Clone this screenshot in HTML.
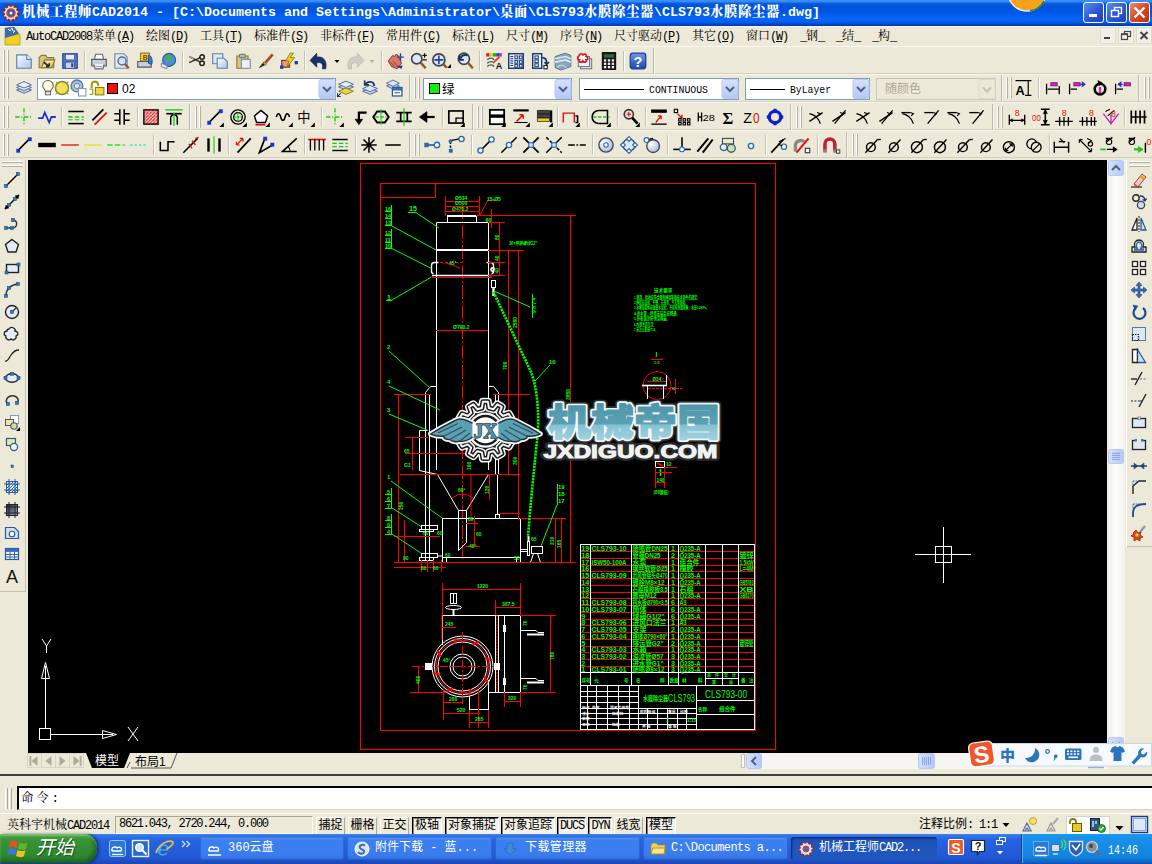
<!DOCTYPE html>
<html><head><meta charset="utf-8"><title>机械工程师CAD2014</title>
<style>
*{box-sizing:border-box;margin:0;padding:0}
html,body{width:1152px;height:864px;overflow:hidden;background:#ece9d8}
body{position:relative;font-family:"Liberation Mono","Noto Serif CJK SC",serif;font-size:12px;color:#000}
.abs{position:absolute}
.l{letter-spacing:-1.2px}
#title{left:0;top:0;width:1152px;height:26px;background:linear-gradient(#3d95ff 0,#2e84f4 2px,#0a5cdc 3.5px,#0052d8 6px,#0055e4 12px,#0666f6 19px,#0560ee 22px,#0348d0 24px,#0235b0 26px);color:#fff}
#title .txt{left:22px;top:5px;white-space:nowrap;font-family:"Liberation Mono","Noto Serif CJK SC",serif;font-size:13.33px;font-weight:bold;line-height:16px}
#title .txt b{letter-spacing:0.67px}
.tb{position:absolute;top:2px;width:21px;height:21px;border:1px solid #fff;border-radius:3px;background:linear-gradient(135deg,#5a8ef0,#2a58d8 55%,#1a40b8)}
.tb.x{background:linear-gradient(135deg,#ea8a68,#d4451f 55%,#b8330f)}
#menu{left:0;top:26px;width:1152px;height:20px;background:#ece9d8;white-space:nowrap;border-top:1px solid #f6f5f0}
#menu .mi{position:absolute;top:3px;height:14px;line-height:14px;font-size:12px}
.row{position:absolute;left:0;width:1152px;height:28px;background:#ece9d8;border-top:1px solid #f8f7f1;border-bottom:1px solid #d2cfbe}
#canvas{left:28px;top:160px;width:1079px;height:593px;background:#000}
#vscroll{left:1107px;top:160px;width:18px;height:593px;background:linear-gradient(90deg,#f0efe8,#fdfdfb 50%,#f3f1ec)}
#tabs{left:28px;top:753px;width:1097px;height:16px;background:#ece9d8}
#cmdsep{left:0;top:774px;width:1152px;height:2px;background:#404040}
#cmd{left:17px;top:786px;width:1135px;height:24px;background:#fff;border-top:2px solid #000;border-left:2px solid #000;border-bottom:1px solid #d4d0c8;font-size:12.5px;line-height:23px;padding:0 0 0 2px;letter-spacing:2.8px}
#status{left:0;top:813px;width:1152px;height:22px;background:#ece9d8;border-top:1px solid #fff}
#task{left:0;top:834px;width:1152px;height:30px;background:linear-gradient(#3f86f2 0,#2f72ea 2px,#2663e0 6px,#245edc 14px,#2157d4 24px,#1c48b8 29px)}

.sb{position:absolute;top:3px;height:18px;line-height:16px;font-size:12px;text-align:center;white-space:nowrap;overflow:hidden;font-family:"Liberation Mono","Noto Sans CJK SC",sans-serif}
.sb.up{border:1px solid #fff;border-right-color:#aca899;border-bottom-color:#aca899}
.sb.dn{border:1px solid #000;border-right-color:#fff;border-bottom-color:#fff;box-shadow:inset 1px 1px 0 #808080;background:#f4f2e8}
.tk{position:absolute;top:3px;height:23px;border-radius:3px;background:linear-gradient(#5a9cf8 0,#3c80f0 3px,#3a7cee 18px,#2f6ce0 23px);box-shadow:inset 0 0 0 1px rgba(20,60,160,.35);color:#fff;font-size:12px;line-height:23px;white-space:nowrap;overflow:hidden;font-family:"Liberation Mono","Noto Sans CJK SC",sans-serif}
.tk.act{background:linear-gradient(#1a48a8 0,#1e52b8 4px,#2058c0 23px);box-shadow:inset 1px 1px 2px rgba(0,0,30,.5)}
.tk i{position:absolute;left:7px;top:4px;width:15px;height:15px;display:block}
.tk>span{position:absolute;left:28px;top:0}
</style></head><body>
<div id="title" class="abs"><div class="abs txt"><b>机械工程师</b>CAD2014 - [C:\Documents and Settings\Administrator\<b>桌面</b>\CLS793<b>水膜除尘器</b>\CLS793<b>水膜除尘器</b>.dwg]</div>
<div class="tb" style="left:1083px"></div><div class="tb" style="left:1106px"></div><div class="tb x" style="left:1129px"></div></div>
<div id="menu" class="abs">
<span class="mi" style="left:26px"><span class="l">AutoCAD2008</span>菜单<span class="l">(<u>A</u>)</span></span>
<span class="mi" style="left:146px">绘图<span class="l">(<u>D</u>)</span></span>
<span class="mi" style="left:200px">工具<span class="l">(<u>T</u>)</span></span>
<span class="mi" style="left:254px">标准件<span class="l">(<u>S</u>)</span></span>
<span class="mi" style="left:320px">非标件<span class="l">(<u>F</u>)</span></span>
<span class="mi" style="left:386px">常用件<span class="l">(<u>C</u>)</span></span>
<span class="mi" style="left:452px">标注<span class="l">(<u>L</u>)</span></span>
<span class="mi" style="left:506px">尺寸<span class="l">(<u>M</u>)</span></span>
<span class="mi" style="left:560px">序号<span class="l">(<u>N</u>)</span></span>
<span class="mi" style="left:614px">尺寸驱动<span class="l">(<u>P</u>)</span></span>
<span class="mi" style="left:692px">其它<span class="l">(<u>O</u>)</span></span>
<span class="mi" style="left:746px">窗口<span class="l">(<u>W</u>)</span></span>
<span class="mi" style="left:800px"><span class="l">_</span>钢<span class="l">_</span></span>
<span class="mi" style="left:836px"><span class="l">_</span>结<span class="l">_</span></span>
<span class="mi" style="left:872px"><span class="l">_</span>构<span class="l">_</span></span>
</div>
<svg class="abs" style="left:0;top:0" width="1152" height="46" viewBox="0 0 1152 46">
<circle cx="11" cy="13" r="7.5" fill="#e4dcdc" stroke="#8a2820" stroke-width="2.6" stroke-dasharray="2.6 1.6"/><circle cx="11" cy="13" r="4" fill="#3a5aa8" stroke="#c84030" stroke-width="1.4"/><circle cx="11" cy="13" r="1.5" fill="#fff"/>
<circle cx="1027" cy="-8" r="19" fill="#f5a21e" stroke="#e8f0e0" stroke-width="1.5"/><path d="M1030 10.8a19 19 0 0 0 14-10" fill="none" stroke="#3a7a28" stroke-width="1.6"/>
<rect x="1089" y="14" width="8" height="3" fill="#fff"/>
<rect x="1114.5" y="7.5" width="7" height="6" fill="none" stroke="#fff" stroke-width="1.4"/><rect x="1111.5" y="10.5" width="7" height="6" fill="#2a58d8" stroke="#fff" stroke-width="1.4"/>
<path d="M1134.5 7.5l10 10M1144.5 7.5l-10 10" stroke="#fff" stroke-width="2.4"/>
<path d="M5 28l9-1 6 8v10h-15z" fill="#f0d020" stroke="#a08810" stroke-width=".6"/><path d="M5 28l9-1 5 7-14 4z" fill="#3a6ab0"/><path d="M8 29l2 2 2-3 1 3 2 0-2 2" fill="none" stroke="#fff" stroke-width=".9"/>
<g stroke="#dedbcc" fill="#f2f0e6"><rect x="1100.5" y="27.5" width="15" height="16"/><rect x="1118.5" y="27.5" width="15" height="16"/><rect x="1136.5" y="27.5" width="15" height="16"/></g>
<rect x="1104" y="37" width="6" height="2" fill="#444"/>
<rect x="1124.5" y="31.5" width="6" height="5" fill="none" stroke="#444" stroke-width="1.2"/><rect x="1121.5" y="34.5" width="6" height="5" fill="#f2f0e6" stroke="#444" stroke-width="1.2"/><path d="M1121 34h7" stroke="#444" stroke-width="1.6"/>
<path d="M1140.5 32l7 7M1147.5 32l-7 7" stroke="#444" stroke-width="2"/>
</svg>
<div class="row" style="top:46px"></div>
<div class="row" style="top:74px"></div>
<div class="row" style="top:102px"></div>
<div class="row" style="top:130px"></div>
<svg class="abs" id="tbs" style="left:0;top:46px" width="1152" height="113" viewBox="0 46 1152 113"><defs>
<linearGradient id="pg" x1="0" y1="0" x2="1" y2="1"><stop offset="0" stop-color="#fff"/><stop offset="1" stop-color="#a8c4e8"/></linearGradient>
<linearGradient id="hg" x1="0" y1="0" x2="0" y2="1"><stop offset="0" stop-color="#6a9aea"/><stop offset="1" stop-color="#1a4ab0"/></linearGradient>
<linearGradient id="dd" x1="0" y1="0" x2="0" y2="1"><stop offset="0" stop-color="#d6e2fd"/><stop offset="1" stop-color="#b4c8f6"/></linearGradient>
<radialGradient id="sp" cx=".35" cy=".35" r=".7"><stop offset="0" stop-color="#fff"/><stop offset="1" stop-color="#a8bcd8"/></radialGradient>
<pattern id="ht" width="3" height="3" patternUnits="userSpaceOnUse"><rect width="3" height="3" fill="#f8c8c8"/><path d="M0 3l3-3" stroke="#e02020" stroke-width="1"/></pattern>
</defs>
<line x1="3.5" y1="50" x2="3.5" y2="72" stroke="#fff"/><line x1="4.5" y1="50" x2="4.5" y2="72" stroke="#b4b1a2"/>
<line x1="7.5" y1="50" x2="7.5" y2="72" stroke="#fff"/><line x1="8.5" y1="50" x2="8.5" y2="72" stroke="#b4b1a2"/>
<g transform="translate(15.04,52.04) scale(1.12)"><path d="M1.5 2.5h9l4 4v8h-13z" fill="url(#pg)" stroke="#5f7fa8" stroke-width="1" /><path d="M10.5 2.5v4h4" fill="#fff" stroke="#5f7fa8" stroke-width="1" /></g>
<g transform="translate(38.04,52.04) scale(1.12)"><path d="M1 5l2-2h4l1 2h6v9h-13z" fill="#d9c47a" stroke="#8a7a3a" stroke-width="1" /><path d="M3 14l3-7h9l-3 7z" fill="#f0dc8c" stroke="#8a7a3a" stroke-width="1" /><path d="M5 9l5 4M10 13v-3M10 13h-3" fill="none" stroke="#2a2a2a" stroke-width="1.6" /></g>
<g transform="translate(61.04,52.04) scale(1.12)"><rect x="1.5" y="1.5" width="13" height="13" fill="#4f78c8" stroke="#2a4a90" stroke-width="1" /><rect x="4" y="2" width="8" height="5" fill="#e8eef8" stroke="#2a4a90" stroke-width="0.6" /><rect x="4" y="9" width="8" height="5.5" fill="#c8d4ea" stroke="#2a4a90" stroke-width="0.6" /><rect x="9" y="10" width="2" height="3.5" fill="#2a4a90" stroke="none" stroke-width="0" /></g>
<line x1="84.5" y1="51" x2="84.5" y2="71" stroke="#c5c2b2"/><line x1="85.5" y1="51" x2="85.5" y2="71" stroke="#fff"/>
<g transform="translate(90.04,52.04) scale(1.12)"><path d="M4 6l1-4h6l1 4" fill="#fff" stroke="#667" stroke-width="1" /><path d="M1.5 6.5h13v6h-13z" fill="#c9ced8" stroke="#556" stroke-width="1" /><path d="M3.5 11l1 4h7l1-4" fill="#f4f6fa" stroke="#667" stroke-width="1" /><line x1="5" y1="13" x2="11" y2="13" stroke="#889" stroke-width="0.8" /></g>
<g transform="translate(112.04,52.04) scale(1.12)"><path d="M2.5 1.5h8l3 3v10h-11z" fill="#dfe8f4" stroke="#6f89b0" stroke-width="1" /><circle cx="9" cy="8" r="3.6" fill="#cfe0f4" stroke="#5a6a80" stroke-width="1.3"/><line x1="11.5" y1="10.8" x2="15" y2="14.5" stroke="#8a5a30" stroke-width="2" /></g>
<g transform="translate(136.04,52.04) scale(1.12)"><path d="M4 1l8 0v7h-8z" fill="#f2d048" stroke="#9a7a18" stroke-width="1" /><path d="M1.5 8.5h12v5h-12z" fill="#c9ced8" stroke="#556" stroke-width="1" /><path d="M11 3c3 0 4 4 3 8l-3-1z" fill="#3a78d8" stroke="#1a488a" stroke-width="0.8" /><text x="6" y="7" font-size="6" font-weight="bold" fill="#7a4a00" font-family="'Liberation Sans',sans-serif">B</text></g>
<g transform="translate(159.04,52.04) scale(1.12)"><circle cx="9" cy="7" r="5.8" fill="#4a90d8" stroke="#2a5a90" stroke-width="1"/><path d="M6 4c2-2 5-1 6 1c-1 2-3 1-4 3c-2 0-3-2-2-4z" fill="#48b048" stroke="none" stroke-width="0" /><path d="M2 10l5 2v3l-5-2z" fill="#e8ecf2" stroke="#778" stroke-width="0.8" /></g>
<line x1="182.5" y1="51" x2="182.5" y2="71" stroke="#c5c2b2"/><line x1="183.5" y1="51" x2="183.5" y2="71" stroke="#fff"/>
<g transform="translate(188.04,52.04) scale(1.12)"><line x1="1" y1="4" x2="11" y2="9" stroke="#333" stroke-width="1.3" /><line x1="1" y1="9.5" x2="11" y2="5" stroke="#333" stroke-width="1.3" /><circle cx="12.5" cy="4.5" r="2" fill="none" stroke="#1a1a1a" stroke-width="1.3"/><circle cx="12.5" cy="10" r="2" fill="none" stroke="#1a1a1a" stroke-width="1.3"/><line x1="1" y1="4" x2="5" y2="6" stroke="#8aa" stroke-width="1.5" /></g>
<g transform="translate(211.04,52.04) scale(1.12)"><path d="M1.5 1.5h9v9h-9z" fill="#dfe8f4" stroke="#5f7fa8" stroke-width="1" /><path d="M5.5 5.5h6l3 3v6h-9z" fill="url(#pg)" stroke="#5f7fa8" stroke-width="1" /></g>
<g transform="translate(234.04,52.04) scale(1.12)"><path d="M2.5 3.5h10v11h-10z" fill="#d8c690" stroke="#8a7a3a" stroke-width="1" /><path d="M5 2h5v3h-5z" fill="#bbb" stroke="#666" stroke-width="0.8" /><path d="M6.5 6.5h8v8h-8z" fill="#eef2f8" stroke="#7f8fa8" stroke-width="1" /></g>
<g transform="translate(257.04,52.04) scale(1.12)"><path d="M2 14l4-5 2 2z" fill="#1a1a1a" stroke="#1a1a1a" stroke-width="0.5" /><line x1="7" y1="10" x2="14" y2="2" stroke="#a05028" stroke-width="2.4" /><line x1="6" y1="9.5" x2="8.5" y2="12" stroke="#d8a030" stroke-width="1.6" /></g>
<g transform="translate(280.04,52.04) scale(1.12)"><rect x="1.5" y="7.5" width="7" height="6" fill="#e89a8a" stroke="#7a2a1a" stroke-width="1" /><path d="M9 1l-4 7h3l-2 6 7-9h-4l3-4z" fill="#f0d020" stroke="#8a6a00" stroke-width="0.7" /><rect x="0" y="12" width="3" height="3" fill="#1c3fb0" stroke="none" stroke-width="0" /><rect x="13" y="8" width="3" height="3" fill="#1c3fb0" stroke="none" stroke-width="0" /></g>
<line x1="304.5" y1="51" x2="304.5" y2="71" stroke="#c5c2b2"/><line x1="305.5" y1="51" x2="305.5" y2="71" stroke="#fff"/>
<g transform="translate(310.04,52.04) scale(1.12)"><path d="M14 15c1.5-7-2-11.5-8-10.5v-3.5l-6 6.5 6 6v-4c4-.5 6 1 5 5.5z" fill="#1a2f6a" stroke="#101c40" stroke-width="0.6" /></g>
<path d="M334.5 60h5l-2.5 3z" fill="#000"/>
<g transform="translate(346.04,52.04) scale(1.12)"><path d="M2 15c-1.5-7 2-11.5 8-10.5v-3.5l6 6.5-6 6v-4c-4-.5-6 1-5 5.5z" fill="#cfcdc4" stroke="#b4b2a8" stroke-width="0.6" /></g>
<path d="M369.5 60h5l-2.5 3z" fill="#b8b5a8"/>
<line x1="381.5" y1="51" x2="381.5" y2="71" stroke="#c5c2b2"/><line x1="382.5" y1="51" x2="382.5" y2="71" stroke="#fff"/>
<g transform="translate(387.04,52.04) scale(1.12)"><path d="M1 8l4-5 2 1 1-2 2 1 1 3 2 4-4 5-5-2z" fill="#d87868" stroke="#7a3028" stroke-width="0.8" /><path d="M5 8l5 5M3 9l4 4" fill="none" stroke="#8a3a30" stroke-width="0.8" /><path d="M12 1v7M9 4.5h6" fill="none" stroke="#1c3fb0" stroke-width="1.2" /><path d="M8 13l5 2 1-3z" fill="#2a3a6a" stroke="none" stroke-width="0" /></g>
<g transform="translate(410.04,52.04) scale(1.12)"><circle cx="6" cy="6" r="4.6" fill="#dce8f4" stroke="#445" stroke-width="1.5"/><line x1="9.5" y1="9.5" x2="14" y2="14.5" stroke="#8a5a30" stroke-width="2.2" /><path d="M11 3h4M13 1v4M11 7h4" fill="none" stroke="#111" stroke-width="1.1" /></g>
<g transform="translate(431.04,52.04) scale(1.12)"><circle cx="7" cy="7" r="5.4" fill="#dce8f4" stroke="#445" stroke-width="1.5"/><path d="M7 3v8M3 7h8" fill="none" stroke="#1c3fb0" stroke-width="1.4" /><line x1="11" y1="11" x2="14" y2="14" stroke="#8a5a30" stroke-width="2.2" /></g>
<path d="M451 64v4h-4z" fill="#000"/>
<g transform="translate(456.04,52.04) scale(1.12)"><circle cx="7" cy="6" r="5" fill="#dce8f4" stroke="#445" stroke-width="1.5"/><line x1="10.5" y1="9.5" x2="15" y2="14.5" stroke="#8a5a30" stroke-width="2.2" /><path d="M10 3c-3-1-5 0-6 3M3 3v4h4" fill="none" stroke="#1a2f6a" stroke-width="1.6" /></g>
<line x1="479.5" y1="51" x2="479.5" y2="71" stroke="#c5c2b2"/><line x1="480.5" y1="51" x2="480.5" y2="71" stroke="#fff"/>
<g transform="translate(485.04,52.04) scale(1.12)"><rect x="1" y="1" width="3" height="3" fill="#e02020" stroke="none" stroke-width="0" /><rect x="4" y="1" width="3" height="3" fill="#e0d020" stroke="none" stroke-width="0" /><rect x="7" y="1" width="3" height="3" fill="#20b020" stroke="none" stroke-width="0" /><rect x="10" y="1" width="3" height="3" fill="#2040e0" stroke="none" stroke-width="0" /><rect x="13" y="1" width="2" height="3" fill="#c020c0" stroke="none" stroke-width="0" /><path d="M2 7c2-2 5-2 6 0M2 10c2-2 5-2 6 0M2 13c2-2 5-2 6 0" fill="none" stroke="#555" stroke-width="1.2" /><text x="9.5" y="15" font-size="8" font-weight="bold" fill="#111" font-family="'Liberation Sans',sans-serif">A</text><line x1="8" y1="9" x2="13" y2="4" stroke="#d84020" stroke-width="1.6" /></g>
<g transform="translate(507.04,52.04) scale(1.12)"><rect x="1.5" y="1.5" width="13" height="13" fill="#eef4fc" stroke="#1a3a7a" stroke-width="1.3" /><rect x="7" y="3.5" width="2.5" height="2.5" fill="none" stroke="#1a3a7a" stroke-width="0.9" /><rect x="7" y="7.5" width="2.5" height="2.5" fill="none" stroke="#1a3a7a" stroke-width="0.9" /><rect x="7" y="11" width="2.5" height="2.5" fill="none" stroke="#1a3a7a" stroke-width="0.9" /><rect x="11" y="3.5" width="2.5" height="2.5" fill="none" stroke="#1a3a7a" stroke-width="0.9" /><rect x="11" y="7.5" width="2.5" height="2.5" fill="none" stroke="#1a3a7a" stroke-width="0.9" /><rect x="11" y="11" width="2.5" height="2.5" fill="none" stroke="#1a3a7a" stroke-width="0.9" /><line x1="3" y1="4" x2="5.5" y2="4" stroke="#1a3a7a" stroke-width="1" /><line x1="3" y1="6" x2="5.5" y2="6" stroke="#1a3a7a" stroke-width="1" /><line x1="3" y1="8" x2="5.5" y2="8" stroke="#1a3a7a" stroke-width="1" /><line x1="3" y1="10" x2="5.5" y2="10" stroke="#1a3a7a" stroke-width="1" /><line x1="3" y1="12" x2="5.5" y2="12" stroke="#1a3a7a" stroke-width="1" /></g>
<g transform="translate(531.04,52.04) scale(1.12)"><rect x="1.5" y="1.5" width="8" height="13" fill="#eef4fc" stroke="#1a3a7a" stroke-width="1.3" /><rect x="3.5" y="3.5" width="3" height="2.5" fill="none" stroke="#1a3a7a" stroke-width="0.9" /><rect x="3.5" y="7" width="3" height="2.5" fill="none" stroke="#1a3a7a" stroke-width="0.9" /><rect x="3.5" y="10.5" width="3" height="2.5" fill="none" stroke="#1a3a7a" stroke-width="0.9" /><path d="M10 5c3 0 4 2 4 5M12 9l2 2 2-2" fill="none" stroke="#1a2f6a" stroke-width="1.4" /><rect x="11.5" y="12" width="3" height="3" fill="#fff" stroke="#111" stroke-width="0.9" /></g>
<g transform="translate(554.04,52.04) scale(1.12)"><path d="M1 4l9-3 5 2v10l-9 3-5-2z" fill="#8aa4c0" stroke="#56708a" stroke-width="0.8" /><path d="M1 6l9-2 5 2M1 9l9-2 5 2" fill="none" stroke="#dfe8f0" stroke-width="1.5" /><path d="M3 14c2-3 5-3 8 0" fill="none" stroke="#c8d4e0" stroke-width="1.2" /></g>
<g transform="translate(576.04,52.04) scale(1.12)"><rect x="4" y="6" width="10" height="9" fill="#d8dce4" stroke="#667" stroke-width="0.8" /><rect x="2" y="4" width="10" height="9" fill="#f0f2f6" stroke="#667" stroke-width="0.8" /><path d="M3 3c0-2 3-2 3 0c1-2 4-1 3 1c2 0 2 3 0 3c1 2-2 3-3 1c-1 2-4 1-3-1c-2 0-2-3 0-4z" fill="#fff" stroke="#d81020" stroke-width="1.5" /></g>
<g transform="translate(600.04,52.04) scale(1.12)"><rect x="2" y="0.5" width="12" height="15" fill="#1a1a1a" stroke="#000" stroke-width="0.8" /><rect x="3.5" y="2" width="9" height="3" fill="#2a6a3a" stroke="none" stroke-width="0" /><rect x="3.5" y="6.5" width="2" height="2" fill="#f4f4f4" stroke="none" stroke-width="0" /><rect x="3.5" y="9.5" width="2" height="2" fill="#f4f4f4" stroke="none" stroke-width="0" /><rect x="3.5" y="12.5" width="2" height="2" fill="#f4f4f4" stroke="none" stroke-width="0" /><rect x="7" y="6.5" width="2" height="2" fill="#f4f4f4" stroke="none" stroke-width="0" /><rect x="7" y="9.5" width="2" height="2" fill="#f4f4f4" stroke="none" stroke-width="0" /><rect x="7" y="12.5" width="2" height="2" fill="#f4f4f4" stroke="none" stroke-width="0" /><rect x="10.5" y="6.5" width="2" height="2" fill="#f4f4f4" stroke="none" stroke-width="0" /><rect x="10.5" y="9.5" width="2" height="2" fill="#f4f4f4" stroke="none" stroke-width="0" /><rect x="10.5" y="12.5" width="2" height="2" fill="#f4f4f4" stroke="none" stroke-width="0" /></g>
<line x1="623.5" y1="51" x2="623.5" y2="71" stroke="#c5c2b2"/><line x1="624.5" y1="51" x2="624.5" y2="71" stroke="#fff"/>
<g transform="translate(629.04,52.04) scale(1.12)"><rect x="1" y="1" width="14" height="14" fill="url(#hg)" stroke="#1a3a8a" stroke-width="1" rx="2.5"/><text x="8" y="13" text-anchor="middle" font-size="13" font-weight="bold" fill="#fff" font-family="'Liberation Sans',sans-serif">?</text></g>
<line x1="653.5" y1="48" x2="653.5" y2="74" stroke="#bcb9aa"/><line x1="654.5" y1="48" x2="654.5" y2="74" stroke="#f6f5ee"/>
<line x1="3.5" y1="77" x2="3.5" y2="99" stroke="#fff"/><line x1="4.5" y1="77" x2="4.5" y2="99" stroke="#b4b1a2"/>
<line x1="7.5" y1="77" x2="7.5" y2="99" stroke="#fff"/><line x1="8.5" y1="77" x2="8.5" y2="99" stroke="#b4b1a2"/>
<g transform="translate(15.52,79.52) scale(1.06)"><path d="M1 10l7-3 7 3-7 3z" fill="#c8d4e8" stroke="#4a6a9a" stroke-width="0.9" /><path d="M1 7.5l7-3 7 3-7 3z" fill="#dce6f4" stroke="#4a6a9a" stroke-width="0.9" /><path d="M1 5l7-3 7 3-7 3z" fill="#eef4fc" stroke="#4a6a9a" stroke-width="0.9" /></g>
<rect x="37.5" y="78.5" width="298" height="21" fill="#fff" stroke="#7f9db9"/>
<g transform="translate(39.52,79.52) scale(1.06)"><path d="M8 1c-3 0-5 2.2-5 5 0 2 2 3 2.5 5h5c.5-2 2.5-3 2.5-5 0-2.8-2-5-5-5z" fill="#fffbe0" stroke="#5a5a4a" stroke-width="1" /><rect x="5.5" y="11.5" width="5" height="3" fill="#e8e8e8" stroke="#555" stroke-width="0.8" /></g>
<g transform="translate(53.52,79.52) scale(1.06)"><circle cx="8" cy="8" r="6.2" fill="#f4e060" stroke="#8a8a20" stroke-width="1.4"/><path d="M2 2l2 2M14 2l-2 2M2 14l2-2M14 14l-2-2" fill="none" stroke="#9a9a30" stroke-width="1" /></g>
<g transform="translate(69.52,78.52) scale(1.06)"><circle cx="7" cy="7" r="5.6" fill="#a8c0d8" stroke="#5a7a9a" stroke-width="1.2"/><circle cx="7" cy="7" r="2.5" fill="#dce8f0" stroke="#5a7a9a" stroke-width="0.8"/><rect x="8.5" y="9.5" width="7" height="7" fill="#fff" stroke="#8a98b0" stroke-width="1" /></g>
<g transform="translate(88.52,79.52) scale(1.06)"><path d="M3 8v-3c0-4 6-4 6 0v1" fill="none" stroke="#a89a20" stroke-width="2" /><rect x="6.5" y="7.5" width="8" height="7" fill="#e8d848" stroke="#8a7a10" stroke-width="1" /><path d="M1 9h3v5h-3" fill="none" stroke="#a89a20" stroke-width="1.2" /></g>
<rect x="107.5" y="83.5" width="10" height="10" fill="#f01010" stroke="#000"/>
<text x="122" y="93" font-size="12" font-family="'Liberation Sans',sans-serif" fill="#000">02</text>
<rect x="319" y="79.5" width="16" height="19" fill="url(#dd)" stroke="#b7c9f0" rx="2"/><path d="M323 87.0l4 4 4-4" fill="none" stroke="#4d6185" stroke-width="2"/>
<g transform="translate(337.52,79.52) scale(1.06)"><path d="M1 7l7-3 7 3-7 3z" fill="#c8d4e8" stroke="#4a6a9a" stroke-width="0.9" /><path d="M1 4.5l7-3 7 3-7 3z" fill="#e4ecf8" stroke="#4a6a9a" stroke-width="0.9" /><path d="M1 11l7-3 7 3-7 3z" fill="#e8d840" stroke="#8a7a10" stroke-width="0.9" /><path d="M0 16l3-3M0 13v3h3" fill="none" stroke="#1a2f6a" stroke-width="1" /></g>
<g transform="translate(361.52,79.52) scale(1.06)"><path d="M1 11l7-3 7 3-7 3z" fill="#c8d4e8" stroke="#4a6a9a" stroke-width="0.9" /><path d="M1 8.5l7-3 7 3-7 3z" fill="#dce6f4" stroke="#4a6a9a" stroke-width="0.9" /><path d="M12 6c0-4-5-5-8-2M3 1v4h4" fill="none" stroke="#1a2f6a" stroke-width="1.6" /></g>
<g transform="translate(385.52,79.52) scale(1.06)"><path d="M1 6l6-3 6 3-6 3z" fill="#c8d4e8" stroke="#4a6a9a" stroke-width="0.9" /><path d="M1 3.5l6-3 6 3-6 3z" fill="#dce6f4" stroke="#4a6a9a" stroke-width="0.9" /><rect x="6.5" y="7.5" width="9" height="8" fill="#fff" stroke="#2a5a9a" stroke-width="1.2" /><rect x="6.5" y="7.5" width="9" height="2.5" fill="#3a6ac8" stroke="#2a5a9a" stroke-width="0.6" /><line x1="8.5" y1="12.5" x2="13.5" y2="12.5" stroke="#2a5a9a" stroke-width="1" /></g>
<line x1="409.5" y1="75" x2="409.5" y2="101" stroke="#bcb9aa"/><line x1="410.5" y1="75" x2="410.5" y2="101" stroke="#f6f5ee"/>
<line x1="414.5" y1="77" x2="414.5" y2="99" stroke="#fff"/><line x1="415.5" y1="77" x2="415.5" y2="99" stroke="#b4b1a2"/>
<line x1="418.5" y1="77" x2="418.5" y2="99" stroke="#fff"/><line x1="419.5" y1="77" x2="419.5" y2="99" stroke="#b4b1a2"/>
<rect x="423.5" y="78.5" width="148" height="21" fill="#fff" stroke="#7f9db9"/>
<rect x="429.5" y="83.5" width="10" height="10" fill="#10f010" stroke="#000"/>
<text x="442" y="93.5" font-size="12.5" font-family="'Liberation Sans','Noto Sans CJK SC',sans-serif" fill="#000">绿</text>
<rect x="555" y="79.5" width="16" height="19" fill="url(#dd)" stroke="#b7c9f0" rx="2"/><path d="M559 87.0l4 4 4-4" fill="none" stroke="#4d6185" stroke-width="2"/>
<rect x="579.5" y="78.5" width="159" height="21" fill="#fff" stroke="#7f9db9"/>
<line x1="584" y1="89.5" x2="644" y2="89.5" stroke="#000"/>
<text x="649" y="93" font-size="11.5" font-family="'Liberation Mono',monospace" fill="#000" textLength="59" lengthAdjust="spacingAndGlyphs">CONTINUOUS</text>
<rect x="722" y="79.5" width="16" height="19" fill="url(#dd)" stroke="#b7c9f0" rx="2"/><path d="M726 87.0l4 4 4-4" fill="none" stroke="#4d6185" stroke-width="2"/>
<rect x="745.5" y="78.5" width="124" height="21" fill="#fff" stroke="#7f9db9"/>
<line x1="750" y1="89.5" x2="785" y2="89.5" stroke="#000"/>
<text x="790" y="93" font-size="11.5" font-family="'Liberation Mono',monospace" fill="#000" textLength="41" lengthAdjust="spacingAndGlyphs">ByLayer</text>
<rect x="853" y="79.5" width="16" height="19" fill="url(#dd)" stroke="#b7c9f0" rx="2"/><path d="M857 87.0l4 4 4-4" fill="none" stroke="#4d6185" stroke-width="2"/>
<rect x="876.5" y="78.5" width="119" height="21" fill="#ece9d8" stroke="#c9c7ba"/>
<text x="885" y="93" font-size="12" font-family="'Liberation Sans','Noto Sans CJK SC',sans-serif" fill="#aca899">随颜色</text>
<rect x="979" y="79.5" width="16" height="19" fill="#ece9d8" stroke="#dcd9c8" rx="2"/><path d="M983 87.5l4 4 4-4" fill="none" stroke="#c5c2b5" stroke-width="2"/>
<line x1="1001.5" y1="75" x2="1001.5" y2="101" stroke="#bcb9aa"/><line x1="1002.5" y1="75" x2="1002.5" y2="101" stroke="#f6f5ee"/>
<line x1="1006.5" y1="77" x2="1006.5" y2="99" stroke="#fff"/><line x1="1007.5" y1="77" x2="1007.5" y2="99" stroke="#b4b1a2"/>
<line x1="1010.5" y1="77" x2="1010.5" y2="99" stroke="#fff"/><line x1="1011.5" y1="77" x2="1011.5" y2="99" stroke="#b4b1a2"/>
<g transform="translate(1015.52,79.52) scale(1.06)"><text x="0" y="15" font-size="12" font-weight="bold" fill="#000" font-family="'Liberation Sans',sans-serif">A</text><path d="M9 1h6M12 1v14M9 15h6M0 1h9" fill="none" stroke="#000" stroke-width="1.1" /></g>
<line x1="1038.5" y1="78" x2="1038.5" y2="98" stroke="#c5c2b2"/><line x1="1039.5" y1="78" x2="1039.5" y2="98" stroke="#fff"/>
<g transform="translate(1045.52,79.52) scale(1.06)"><path d="M1 4v10M2 9h11M13 6v8" fill="none" stroke="#000" stroke-width="1.2" /><rect x="5" y="3" width="6" height="3" fill="#e020c0" stroke="#501050" stroke-width="0.7" /></g>
<g transform="translate(1068.52,79.52) scale(1.06)"><path d="M1 4v10M2 9h6" fill="none" stroke="#000" stroke-width="1.2" /><rect x="5" y="3" width="6" height="3" fill="#e020c0" stroke="#501050" stroke-width="0.7" /><path d="M11 4.5h4M13 2.5l2.5 2-2.5 2z" fill="#1c2fd0" stroke="#1c2fd0" stroke-width="1" /></g>
<g transform="translate(1091.52,79.52) scale(1.06)"><circle cx="8" cy="9" r="5" fill="none" stroke="#000" stroke-width="2.4"/><path d="M6 1l4 2-3 3z" fill="#000" stroke="#000" stroke-width="0.5" /><line x1="8" y1="7" x2="8" y2="13" stroke="#e020c0" stroke-width="2.2" /></g>
<g transform="translate(1114.52,79.52) scale(1.06)"><path d="M1 4v10M2 9h6" fill="none" stroke="#000" stroke-width="1.2" /><rect x="9" y="3" width="6" height="3" fill="#e020c0" stroke="#501050" stroke-width="0.7" /><path d="M4 4.5h4M6 2.5l-2.5 2 2.5 2z" fill="#1c2fd0" stroke="#1c2fd0" stroke-width="1" /></g>
<line x1="1138.5" y1="75" x2="1138.5" y2="101" stroke="#bcb9aa"/><line x1="1139.5" y1="75" x2="1139.5" y2="101" stroke="#f6f5ee"/>
<line x1="1144.5" y1="77" x2="1144.5" y2="99" stroke="#fff"/><line x1="1145.5" y1="77" x2="1145.5" y2="99" stroke="#b4b1a2"/>
<line x1="1148.5" y1="77" x2="1148.5" y2="99" stroke="#fff"/><line x1="1149.5" y1="77" x2="1149.5" y2="99" stroke="#b4b1a2"/>
<line x1="3.5" y1="106" x2="3.5" y2="128" stroke="#fff"/><line x1="4.5" y1="106" x2="4.5" y2="128" stroke="#b4b1a2"/>
<line x1="7.5" y1="106" x2="7.5" y2="128" stroke="#fff"/><line x1="8.5" y1="106" x2="8.5" y2="128" stroke="#b4b1a2"/>
<g transform="translate(15.20,108.20) scale(1.1)"><line x1="0" y1="8" x2="16" y2="8" stroke="#18c818" stroke-width="1.2" stroke-dasharray="4 1.5 1 1.5"/><line x1="8" y1="0" x2="8" y2="16" stroke="#18c818" stroke-width="1.2" stroke-dasharray="4 1.5 1 1.5"/></g>
<g transform="translate(38.20,108.20) scale(1.1)"><path d="M0 9h4l2-5 4 9 2-5h4" fill="none" stroke="#1c2fd0" stroke-width="1.6" /></g>
<line x1="61.5" y1="107" x2="61.5" y2="127" stroke="#c5c2b2"/><line x1="62.5" y1="107" x2="62.5" y2="127" stroke="#fff"/>
<g transform="translate(67.20,108.20) scale(1.1)"><line x1="1" y1="3" x2="15" y2="3" stroke="#000" stroke-width="1.4" /><line x1="1" y1="8" x2="15" y2="8" stroke="#18c818" stroke-width="1.4" stroke-dasharray="4 2"/><line x1="1" y1="10.5" x2="15" y2="10.5" stroke="#18c818" stroke-width="1" stroke-dasharray="4 2"/><line x1="1" y1="14" x2="15" y2="14" stroke="#000" stroke-width="1.4" /></g>
<g transform="translate(90.20,108.20) scale(1.1)"><line x1="2" y1="11" x2="12" y2="1" stroke="#000" stroke-width="1.6" /><line x1="4" y1="15" x2="15" y2="4" stroke="#e01010" stroke-width="1.6" /></g>
<g transform="translate(113.20,108.20) scale(1.1)"><path d="M1 5h5M10 5h5M1 11h5M10 11h5M6 1v14M10 1v14" fill="none" stroke="#000" stroke-width="1.4" /></g>
<line x1="137.5" y1="107" x2="137.5" y2="127" stroke="#c5c2b2"/><line x1="138.5" y1="107" x2="138.5" y2="127" stroke="#fff"/>
<g transform="translate(142.20,108.20) scale(1.1)"><rect x="1.5" y="1.5" width="13" height="13" fill="url(#ht)" stroke="#000" stroke-width="1.2" /></g>
<g transform="translate(165.20,108.20) scale(1.1)"><line x1="0" y1="1.5" x2="16" y2="1.5" stroke="#18c818" stroke-width="1.2" /><line x1="1" y1="5" x2="15" y2="5" stroke="#000" stroke-width="1.5" /><path d="M5 15v-6a3 3 0 0 1 6 0v6" fill="none" stroke="#000" stroke-width="1.3" /><line x1="8" y1="4" x2="8" y2="16" stroke="#18c818" stroke-width="1.2" /></g>
<line x1="189.5" y1="104" x2="189.5" y2="130" stroke="#bcb9aa"/><line x1="190.5" y1="104" x2="190.5" y2="130" stroke="#f6f5ee"/>
<line x1="195.5" y1="106" x2="195.5" y2="128" stroke="#fff"/><line x1="196.5" y1="106" x2="196.5" y2="128" stroke="#b4b1a2"/>
<line x1="199.5" y1="106" x2="199.5" y2="128" stroke="#fff"/><line x1="200.5" y1="106" x2="200.5" y2="128" stroke="#b4b1a2"/>
<g transform="translate(206.20,108.20) scale(1.1)"><line x1="2.5" y1="13" x2="13" y2="2.5" stroke="#000" stroke-width="1.5" /><rect x="1" y="11.5" width="3.5" height="3.5" fill="#1c2fd0" stroke="none" stroke-width="0" /><rect x="11.5" y="1" width="3.5" height="3.5" fill="#1c2fd0" stroke="none" stroke-width="0" /><path d="M16 13v4h-4z" fill="#000"/></g>
<g transform="translate(229.20,108.20) scale(1.1)"><circle cx="8" cy="8" r="6.5" fill="none" stroke="#000" stroke-width="1.2"/><circle cx="8" cy="8" r="4" fill="none" stroke="#000" stroke-width="1.2"/><line x1="4" y1="8" x2="12" y2="8" stroke="#18c818" stroke-width="1" /><line x1="8" y1="4" x2="8" y2="12" stroke="#18c818" stroke-width="1" /><path d="M16 13v4h-4z" fill="#000"/></g>
<g transform="translate(252.20,108.20) scale(1.1)"><path d="M8 2l6 5-2 6h-8l-2-6z" fill="#fff" stroke="#000" stroke-width="1.3" /><line x1="3" y1="15" x2="12" y2="15" stroke="#e01010" stroke-width="1.6" /><path d="M16 13v4h-4z" fill="#000"/></g>
<g transform="translate(275.20,108.20) scale(1.1)"><path d="M1 8c1-4 3-4 4 0s3 4 4 0 3-4 4 0" fill="none" stroke="#000" stroke-width="1.4" /><path d="M16 13v4h-4z" fill="#000"/></g>
<g transform="translate(297.20,108.20) scale(1.1)"><text x="0" y="13" font-size="12" fill="#000" font-family="'Liberation Sans','Noto Sans CJK SC',sans-serif">中</text><path d="M16 13v4h-4z" fill="#000"/></g>
<line x1="321.5" y1="107" x2="321.5" y2="127" stroke="#c5c2b2"/><line x1="322.5" y1="107" x2="322.5" y2="127" stroke="#fff"/>
<g transform="translate(326.20,108.20) scale(1.1)"><line x1="0" y1="8" x2="16" y2="8" stroke="#18c818" stroke-width="1.2" stroke-dasharray="4 1.5 1 1.5"/><line x1="8" y1="0" x2="8" y2="16" stroke="#18c818" stroke-width="1.2" stroke-dasharray="4 1.5 1 1.5"/><path d="M16 13v4h-4z" fill="#000"/></g>
<g transform="translate(351.20,108.20) scale(1.1)"><path d="M14 4h-7v8" fill="none" stroke="#000" stroke-width="2" /><path d="M3.5 10h7l-3.5 5z" fill="#000" stroke="#000" stroke-width="0.5" /></g>
<g transform="translate(372.20,108.20) scale(1.1)"><path d="M1 8l3.5-5h7l3.5 5-3.5 5h-7z" fill="none" stroke="#000" stroke-width="1.8" /><line x1="3" y1="8" x2="13" y2="8" stroke="#18c818" stroke-width="1.2" stroke-dasharray="3 1.5"/><line x1="8" y1="1" x2="8" y2="15" stroke="#18c818" stroke-width="1" /></g>
<g transform="translate(395.20,108.20) scale(1.1)"><path d="M1 4h14M1 12h14M5 4v8M11 4v8" fill="none" stroke="#000" stroke-width="1.6" /><line x1="8" y1="0" x2="8" y2="16" stroke="#18c818" stroke-width="1.1" /></g>
<g transform="translate(418.20,108.20) scale(1.1)"><path d="M1 8l7-5v10z" fill="#000" stroke="#000" stroke-width="0.5" /><line x1="7" y1="8" x2="15" y2="8" stroke="#000" stroke-width="2" /></g>
<line x1="442.5" y1="107" x2="442.5" y2="127" stroke="#c5c2b2"/><line x1="443.5" y1="107" x2="443.5" y2="127" stroke="#fff"/>
<g transform="translate(447.20,108.20) scale(1.1)"><rect x="1.5" y="2.5" width="13" height="11" fill="none" stroke="#000" stroke-width="1.5" /><path d="M8 13v-4h7" fill="none" stroke="#000" stroke-width="1.2" /><path d="M16 13v4h-4z" fill="#000"/></g>
<line x1="472.5" y1="104" x2="472.5" y2="130" stroke="#bcb9aa"/><line x1="473.5" y1="104" x2="473.5" y2="130" stroke="#f6f5ee"/>
<line x1="477.5" y1="106" x2="477.5" y2="128" stroke="#fff"/><line x1="478.5" y1="106" x2="478.5" y2="128" stroke="#b4b1a2"/>
<line x1="481.5" y1="106" x2="481.5" y2="128" stroke="#fff"/><line x1="482.5" y1="106" x2="482.5" y2="128" stroke="#b4b1a2"/>
<g transform="translate(488.20,108.20) scale(1.1)"><rect x="1.5" y="1.5" width="13" height="13" fill="#fff" stroke="#000" stroke-width="1.6" /><rect x="1.5" y="6" width="13" height="2.5" fill="#000" stroke="#000" stroke-width="0.5" /><path d="M16 13v4h-4z" fill="#000"/></g>
<g transform="translate(512.20,108.20) scale(1.1)"><line x1="1" y1="2" x2="15" y2="2" stroke="#000" stroke-width="2" /><line x1="2" y1="13" x2="14" y2="13" stroke="#000" stroke-width="1" /><path d="M4 12l6-6M10 6h-3.5M10 6v3.5" fill="none" stroke="#e01010" stroke-width="1.4" /><path d="M16 13v4h-4z" fill="#000"/></g>
<g transform="translate(535.20,108.20) scale(1.1)"><path d="M2 2h11v3h-11zM2 5.5h11v3h-11z" fill="#444" stroke="#000" stroke-width="0.6" /><path d="M2 9h11v3h-11z" fill="#e8d820" stroke="#000" stroke-width="0.6" /><line x1="14.5" y1="2" x2="14.5" y2="13" stroke="#000" stroke-width="2" /><path d="M16 13v4h-4z" fill="#000"/></g>
<line x1="557.5" y1="107" x2="557.5" y2="127" stroke="#c5c2b2"/><line x1="558.5" y1="107" x2="558.5" y2="127" stroke="#fff"/>
<g transform="translate(562.20,108.20) scale(1.1)"><path d="M1 4v9M11 4v9M1 4.5h10" fill="none" stroke="#e01010" stroke-width="1.3" /><path d="M12 7h2v6h-2" fill="none" stroke="#000" stroke-width="1.4" /><path d="M16 13v4h-4z" fill="#000"/></g>
<line x1="587.5" y1="107" x2="587.5" y2="127" stroke="#c5c2b2"/><line x1="588.5" y1="107" x2="588.5" y2="127" stroke="#fff"/>
<g transform="translate(593.20,108.20) scale(1.1)"><path d="M5 2h8v12h-8" fill="none" stroke="#000" stroke-width="1.4" /><path d="M5 2a6 6 0 0 0 0 12" fill="none" stroke="#000" stroke-width="1.4" /><line x1="0" y1="8" x2="15" y2="8" stroke="#18c818" stroke-width="1.2" stroke-dasharray="3 1.5"/><path d="M16 13v4h-4z" fill="#000"/></g>
<line x1="617.5" y1="107" x2="617.5" y2="127" stroke="#c5c2b2"/><line x1="618.5" y1="107" x2="618.5" y2="127" stroke="#fff"/>
<g transform="translate(622.20,108.20) scale(1.1)"><circle cx="6" cy="5.5" r="4.2" fill="#f0d8d8" stroke="#333" stroke-width="1.4"/><path d="M4 5.5h4M6 3.5v4" fill="none" stroke="#e01010" stroke-width="1" /><line x1="9" y1="8.5" x2="14" y2="14" stroke="#000" stroke-width="2.4" /><path d="M16 13v4h-4z" fill="#000"/></g>
<line x1="645.5" y1="107" x2="645.5" y2="127" stroke="#c5c2b2"/><line x1="646.5" y1="107" x2="646.5" y2="127" stroke="#fff"/>
<g transform="translate(650.20,108.20) scale(1.1)"><rect x="1" y="1.5" width="14" height="2.5" fill="#000" stroke="#000" stroke-width="0.5" /><line x1="1" y1="14.5" x2="15" y2="14.5" stroke="#000" stroke-width="1.2" /><path d="M5 13l5-6M10 7h-3M10 7v3" fill="none" stroke="#e01010" stroke-width="1.2" /></g>
<g transform="translate(673.20,108.20) scale(1.1)"><rect x="1" y="1" width="3" height="3" fill="none" stroke="#000" stroke-width="1" /><path d="M4 5l4 4M8 9h-3M8 9v-3" fill="none" stroke="#e01010" stroke-width="1.2" /><rect x="5" y="9.5" width="2.2" height="2.2" fill="none" stroke="#000" stroke-width="1" /><rect x="5" y="13" width="2.2" height="2.2" fill="none" stroke="#000" stroke-width="1" /><rect x="9" y="9.5" width="2.2" height="2.2" fill="none" stroke="#000" stroke-width="1" /><rect x="9" y="13" width="2.2" height="2.2" fill="none" stroke="#000" stroke-width="1" /><rect x="13" y="9.5" width="2.2" height="2.2" fill="none" stroke="#000" stroke-width="1" /><rect x="13" y="13" width="2.2" height="2.2" fill="none" stroke="#000" stroke-width="1" /></g>
<g transform="translate(697.20,108.20) scale(1.1)"><path d="M1 4v8M4 4v8M1 8h3" fill="none" stroke="#000" stroke-width="1.2" /><text x="5" y="12" font-size="8.5" fill="#000" font-family="'Liberation Sans',sans-serif" textLength="11" lengthAdjust="spacingAndGlyphs">28</text></g>
<g transform="translate(720.20,108.20) scale(1.1)"><text x="2" y="14" font-size="15" font-weight="bold" fill="#000" font-family="'Liberation Serif',serif">Σ</text></g>
<g transform="translate(743.20,108.20) scale(1.1)"><text x="0" y="13.5" font-size="13" fill="#000" font-family="'Liberation Sans',sans-serif">Z</text><text x="9" y="13.5" font-size="13" fill="#e01010" font-family="'Liberation Sans',sans-serif" textLength="6" lengthAdjust="spacingAndGlyphs">0</text></g>
<g transform="translate(766.20,108.20) scale(1.1)"><circle cx="8" cy="8" r="5.2" fill="none" stroke="#1020c8" stroke-width="3"/><rect x="6.5" y="0.5" width="3" height="3" fill="#1020c8" stroke="none" stroke-width="0" /><rect x="6.5" y="12.5" width="3" height="3" fill="#1020c8" stroke="none" stroke-width="0" /><rect x="0.5" y="6.5" width="3" height="3" fill="#1020c8" stroke="none" stroke-width="0" /><rect x="12.5" y="6.5" width="3" height="3" fill="#1020c8" stroke="none" stroke-width="0" /></g>
<line x1="790.5" y1="104" x2="790.5" y2="130" stroke="#bcb9aa"/><line x1="791.5" y1="104" x2="791.5" y2="130" stroke="#f6f5ee"/>
<line x1="796.5" y1="106" x2="796.5" y2="128" stroke="#fff"/><line x1="797.5" y1="106" x2="797.5" y2="128" stroke="#b4b1a2"/>
<line x1="800.5" y1="106" x2="800.5" y2="128" stroke="#fff"/><line x1="801.5" y1="106" x2="801.5" y2="128" stroke="#b4b1a2"/>
<g transform="translate(807.20,108.20) scale(1.1)"><path d="M2 5c5 1 8 3 10 9" fill="none" stroke="#000" stroke-width="1.2" /><path d="M2 12l12-8" fill="none" stroke="#000" stroke-width="1.2" /><path d="M9 4l3 1-2 2" fill="none" stroke="#000" stroke-width="1" /></g>
<g transform="translate(830.20,108.20) scale(1.1)"><path d="M14 2l-10 12" fill="none" stroke="#000" stroke-width="1.2" /><path d="M2 12l12-8" fill="none" stroke="#000" stroke-width="1.2" /><path d="M9 4l3 1-2 2" fill="none" stroke="#000" stroke-width="1" /></g>
<g transform="translate(854.20,108.20) scale(1.1)"><path d="M2 5c5 1 8 3 10 9" fill="none" stroke="#000" stroke-width="1.2" /><path d="M2 12l12-8" fill="none" stroke="#000" stroke-width="1.2" /><path d="M9 4l3 1-2 2" fill="none" stroke="#000" stroke-width="1" /></g>
<g transform="translate(877.20,108.20) scale(1.1)"><path d="M14 2l-10 12" fill="none" stroke="#000" stroke-width="1.2" /><path d="M2 12l12-8" fill="none" stroke="#000" stroke-width="1.2" /><path d="M9 4l3 1-2 2" fill="none" stroke="#000" stroke-width="1" /></g>
<g transform="translate(900.20,108.20) scale(1.1)"><path d="M2 5c5 1 8 3 10 9" fill="none" stroke="#000" stroke-width="1.2" /><path d="M1 4h8" fill="none" stroke="#000" stroke-width="1.2" /><path d="M9 4l3 1-2 2" fill="none" stroke="#000" stroke-width="1" /></g>
<g transform="translate(923.20,108.20) scale(1.1)"><path d="M14 2l-10 12" fill="none" stroke="#000" stroke-width="1.2" /><path d="M1 4h8" fill="none" stroke="#000" stroke-width="1.2" /><path d="M9 4l3 1-2 2" fill="none" stroke="#000" stroke-width="1" /></g>
<g transform="translate(946.20,108.20) scale(1.1)"><path d="M2 5c5 1 8 3 10 9" fill="none" stroke="#000" stroke-width="1.2" /><path d="M1 4h8" fill="none" stroke="#000" stroke-width="1.2" /><path d="M9 4l3 1-2 2" fill="none" stroke="#000" stroke-width="1" /></g>
<g transform="translate(968.20,108.20) scale(1.1)"><path d="M14 2l-10 12" fill="none" stroke="#000" stroke-width="1.2" /><path d="M1 4h8" fill="none" stroke="#000" stroke-width="1.2" /><path d="M9 4l3 1-2 2" fill="none" stroke="#000" stroke-width="1" /></g>
<line x1="992.5" y1="104" x2="992.5" y2="130" stroke="#bcb9aa"/><line x1="993.5" y1="104" x2="993.5" y2="130" stroke="#f6f5ee"/>
<line x1="997.5" y1="106" x2="997.5" y2="128" stroke="#fff"/><line x1="998.5" y1="106" x2="998.5" y2="128" stroke="#b4b1a2"/>
<line x1="1001.5" y1="106" x2="1001.5" y2="128" stroke="#fff"/><line x1="1002.5" y1="106" x2="1002.5" y2="128" stroke="#b4b1a2"/>
<g transform="translate(1008.20,108.20) scale(1.1)"><path d="M1 6v9M15 6v9M1 11h14" fill="none" stroke="#000" stroke-width="1.2" /><path d="M1 11l3-1.5v3zM15 11l-3-1.5v3z" fill="#000" stroke="#000" stroke-width="0.3" /><text x="6" y="7" font-size="8" fill="#e01010" font-family="'Liberation Sans',sans-serif">8</text></g>
<g transform="translate(1033.20,108.20) scale(1.1)"><text x="-1" y="12" font-size="9" fill="#e01010" font-family="'Liberation Sans',sans-serif" textLength="8" lengthAdjust="spacingAndGlyphs">00</text><path d="M7 1h8M7 15h8M11 1v14" fill="none" stroke="#000" stroke-width="1.4" /><path d="M11 1l-2 4h4zM11 15l-2-4h4z" fill="#000" stroke="#000" stroke-width="0.3" /></g>
<g transform="translate(1055.20,108.20) scale(1.1)"><path d="M0 12h16M4 8v8M8 8v8M12 8v8" fill="none" stroke="#000" stroke-width="1.2" /><text x="6" y="7" font-size="8" fill="#e01010" font-family="'Liberation Sans',sans-serif">8</text></g>
<g transform="translate(1079.20,108.20) scale(1.1)"><path d="M0 12h16M3 8v8M7 8v8M11 8v8M14 8v8" fill="none" stroke="#000" stroke-width="1.2" /><text x="9" y="7" font-size="8" fill="#e01010" font-family="'Liberation Sans',sans-serif">8</text></g>
<g transform="translate(1102.20,108.20) scale(1.1)"><path d="M1 5l7 9M15 5l-7 9M8 6v9" fill="none" stroke="#c020c0" stroke-width="1.2" /><path d="M3 3l4-2M5 7l6-5" fill="none" stroke="#000" stroke-width="1.1" /><text x="8" y="8" font-size="8" fill="#e01010" font-family="'Liberation Sans',sans-serif">8</text></g>
<line x1="1124.5" y1="107" x2="1124.5" y2="127" stroke="#c5c2b2"/><line x1="1125.5" y1="107" x2="1125.5" y2="127" stroke="#fff"/>
<g transform="translate(1130.20,108.20) scale(1.1)"><path d="M1 2v12M5 2v12M9 2v12M13 2v12M1 8h14" fill="none" stroke="#000" stroke-width="1.5" /></g>
<line x1="3.5" y1="134" x2="3.5" y2="156" stroke="#fff"/><line x1="4.5" y1="134" x2="4.5" y2="156" stroke="#b4b1a2"/>
<line x1="7.5" y1="134" x2="7.5" y2="156" stroke="#fff"/><line x1="8.5" y1="134" x2="8.5" y2="156" stroke="#b4b1a2"/>
<g transform="translate(15.20,136.20) scale(1.1)"><line x1="2.5" y1="13" x2="13" y2="2.5" stroke="#000" stroke-width="1.5" /><rect x="1" y="11.5" width="3.5" height="3.5" fill="#1c2fd0" stroke="none" stroke-width="0" /><rect x="11.5" y="1" width="3.5" height="3.5" fill="#1c2fd0" stroke="none" stroke-width="0" /></g>
<g transform="translate(38.20,136.20) scale(1.1)"><rect x="0" y="6" width="16" height="4" fill="#000" stroke="none" stroke-width="0" /></g>
<g transform="translate(61.20,136.20) scale(1.1)"><line x1="0" y1="8" x2="16" y2="8" stroke="#e04030" stroke-width="1.5" /></g>
<g transform="translate(84.20,136.20) scale(1.1)"><line x1="0" y1="8" x2="16" y2="8" stroke="#e8e040" stroke-width="1.5" /></g>
<g transform="translate(107.20,136.20) scale(1.1)"><line x1="0" y1="8" x2="16" y2="8" stroke="#30e030" stroke-width="1.5" stroke-dasharray="5 2"/></g>
<g transform="translate(130.20,136.20) scale(1.1)"><line x1="0" y1="8" x2="16" y2="8" stroke="#40d8e8" stroke-width="1.5" stroke-dasharray="2 2"/></g>
<line x1="153.5" y1="135" x2="153.5" y2="155" stroke="#c5c2b2"/><line x1="154.5" y1="135" x2="154.5" y2="155" stroke="#fff"/>
<g transform="translate(159.20,136.20) scale(1.1)"><path d="M1 5v8h7v-8h6" fill="none" stroke="#000" stroke-width="1.4" /></g>
<g transform="translate(182.20,136.20) scale(1.1)"><line x1="1" y1="15" x2="14" y2="2" stroke="#000" stroke-width="1.4" /><path d="M6 7l3 4M9 4l3 4" fill="none" stroke="#e01010" stroke-width="1.2" /><path d="M12 2l3-1" fill="none" stroke="#e01010" stroke-width="1.2" /></g>
<g transform="translate(205.20,136.20) scale(1.1)"><line x1="3" y1="2" x2="3" y2="14" stroke="#000" stroke-width="2.2" /><line x1="13" y1="2" x2="13" y2="14" stroke="#000" stroke-width="2.2" /><line x1="8" y1="0" x2="8" y2="16" stroke="#18c818" stroke-width="1" /></g>
<line x1="228.5" y1="135" x2="228.5" y2="155" stroke="#c5c2b2"/><line x1="229.5" y1="135" x2="229.5" y2="155" stroke="#fff"/>
<g transform="translate(234.20,136.20) scale(1.1)"><line x1="3" y1="15" x2="15" y2="2" stroke="#000" stroke-width="1.6" /><path d="M2 8l6-6M2 8v-3M2 8h3M8 2v3M8 2h-3" fill="none" stroke="#e01010" stroke-width="1.1" /></g>
<g transform="translate(257.20,136.20) scale(1.1)"><path d="M7 2l-5 13 12-7" fill="none" stroke="#000" stroke-width="1.5" /><rect x="5.5" y="0.5" width="3.5" height="3.5" fill="#1c2fd0" stroke="none" stroke-width="0" /><rect x="12" y="6" width="3.5" height="3.5" fill="#1c2fd0" stroke="none" stroke-width="0" /></g>
<g transform="translate(280.20,136.20) scale(1.1)"><path d="M15 2l-13 12h13" fill="none" stroke="#000" stroke-width="1.4" /><path d="M9 14c0-2-1-4-2-5" fill="none" stroke="#000" stroke-width="1" /></g>
<line x1="304.5" y1="135" x2="304.5" y2="155" stroke="#c5c2b2"/><line x1="305.5" y1="135" x2="305.5" y2="155" stroke="#fff"/>
<g transform="translate(308.20,136.20) scale(1.1)"><line x1="0" y1="3" x2="16" y2="3" stroke="#e01010" stroke-width="1.5" /><path d="M2 3v10M6 3v10M10 3v10M14 3v10" fill="none" stroke="#000" stroke-width="1.2" /></g>
<g transform="translate(331.20,136.20) scale(1.1)"><line x1="1" y1="3" x2="15" y2="3" stroke="#000" stroke-width="1.3" /><line x1="1" y1="13" x2="15" y2="13" stroke="#000" stroke-width="1.3" /><line x1="1" y1="6.5" x2="15" y2="6.5" stroke="#18c818" stroke-width="1.2" stroke-dasharray="4 2"/><line x1="1" y1="9.5" x2="15" y2="9.5" stroke="#18c818" stroke-width="1.2" stroke-dasharray="4 2"/></g>
<line x1="355.5" y1="135" x2="355.5" y2="155" stroke="#c5c2b2"/><line x1="356.5" y1="135" x2="356.5" y2="155" stroke="#fff"/>
<g transform="translate(360.20,136.20) scale(1.1)"><path d="M8 1v14M1 8h14M3 3l10 10M13 3l-10 10" fill="none" stroke="#000" stroke-width="1.4" /></g>
<g transform="translate(384.20,136.20) scale(1.1)"><line x1="1" y1="8" x2="15" y2="8" stroke="#000" stroke-width="1.4" /></g>
<line x1="409.5" y1="132" x2="409.5" y2="158" stroke="#bcb9aa"/><line x1="410.5" y1="132" x2="410.5" y2="158" stroke="#f6f5ee"/>
<line x1="414.5" y1="134" x2="414.5" y2="156" stroke="#fff"/><line x1="415.5" y1="134" x2="415.5" y2="156" stroke="#b4b1a2"/>
<line x1="418.5" y1="134" x2="418.5" y2="156" stroke="#fff"/><line x1="419.5" y1="134" x2="419.5" y2="156" stroke="#b4b1a2"/>
<g transform="translate(423.20,136.20) scale(1.1)"><line x1="3" y1="8" x2="11" y2="8" stroke="#2a6aa8" stroke-width="1.6" /><rect x="1" y="6" width="4" height="4" fill="#2a6aa8" stroke="none" stroke-width="0" /><circle cx="12.5" cy="8" r="2.5" fill="#eef6ff" stroke="#2a6aa8" stroke-width="1.2"/></g>
<g transform="translate(447.20,136.20) scale(1.1)"><path d="M3 14v-8" fill="none" stroke="#000" stroke-width="1.4" stroke-dasharray="2 1.5"/><line x1="3" y1="4" x2="11" y2="2.5" stroke="#000" stroke-width="1.2" /><rect x="1.5" y="11.5" width="3.5" height="3.5" fill="#2a6aa8" stroke="none" stroke-width="0" /><circle cx="13" cy="2.5" r="2.4" fill="#eef6ff" stroke="#2a6aa8" stroke-width="1.2"/><circle cx="3" cy="4.5" r="1.5" fill="#2a6aa8" stroke="#2a6aa8" stroke-width="0.5"/></g>
<line x1="471.5" y1="135" x2="471.5" y2="155" stroke="#c5c2b2"/><line x1="472.5" y1="135" x2="472.5" y2="155" stroke="#fff"/>
<g transform="translate(477.20,136.20) scale(1.1)"><line x1="3" y1="13" x2="12" y2="4" stroke="#000" stroke-width="1.4" /><circle cx="13" cy="3" r="2.4" fill="#eef6ff" stroke="#2a6aa8" stroke-width="1.2"/><circle cx="3" cy="13" r="2.4" fill="#eef6ff" stroke="#2a6aa8" stroke-width="1.2"/></g>
<g transform="translate(500.20,136.20) scale(1.1)"><line x1="1" y1="15" x2="15" y2="1" stroke="#000" stroke-width="1.4" /><circle cx="8" cy="8" r="2.4" fill="#eef6ff" stroke="#2a6aa8" stroke-width="1.2"/></g>
<g transform="translate(522.20,136.20) scale(1.1)"><line x1="1" y1="1" x2="15" y2="15" stroke="#000" stroke-width="1.6" /><line x1="1" y1="15" x2="15" y2="1" stroke="#000" stroke-width="1.6" /><rect x="6" y="6" width="4" height="4" fill="#cfe6ff" stroke="#2a6aa8" stroke-width="1" /></g>
<g transform="translate(545.20,136.20) scale(1.1)"><line x1="1" y1="1" x2="15" y2="15" stroke="#000" stroke-width="1.4" stroke-dasharray="3 1.5"/><line x1="1" y1="15" x2="15" y2="1" stroke="#000" stroke-width="1.4" /><rect x="6" y="6" width="4" height="4" fill="#cfe6ff" stroke="#2a6aa8" stroke-width="1" /></g>
<g transform="translate(568.20,136.20) scale(1.1)"><line x1="0" y1="8" x2="16" y2="8" stroke="#000" stroke-width="1.5" stroke-dasharray="6 1.5 1.5 1.5"/></g>
<line x1="592.5" y1="135" x2="592.5" y2="155" stroke="#c5c2b2"/><line x1="593.5" y1="135" x2="593.5" y2="155" stroke="#fff"/>
<g transform="translate(597.20,136.20) scale(1.1)"><circle cx="8" cy="8" r="6.5" fill="url(#sp)" stroke="#445" stroke-width="1.2"/><circle cx="8" cy="8" r="2" fill="#fff" stroke="#2a6aa8" stroke-width="1"/></g>
<g transform="translate(620.20,136.20) scale(1.1)"><circle cx="8" cy="8" r="5.5" fill="#dce8f4" stroke="#445" stroke-width="1.2"/><path d="M5.8 2.5l2.2-2.2 2.2 2.2-2.2 2.2z" fill="#eef6ff" stroke="#2a6aa8" stroke-width="1" /><path d="M5.8 13.5l2.2-2.2 2.2 2.2-2.2 2.2z" fill="#eef6ff" stroke="#2a6aa8" stroke-width="1" /><path d="M0.3 8l2.2-2.2 2.2 2.2-2.2 2.2z" fill="#eef6ff" stroke="#2a6aa8" stroke-width="1" /><path d="M11.3 8l2.2-2.2 2.2 2.2-2.2 2.2z" fill="#eef6ff" stroke="#2a6aa8" stroke-width="1" /></g>
<g transform="translate(643.20,136.20) scale(1.1)"><circle cx="9" cy="9" r="5.8" fill="url(#sp)" stroke="#445" stroke-width="1.2"/><line x1="1" y1="4" x2="9" y2="2" stroke="#000" stroke-width="1.2" /><circle cx="3" cy="3.5" r="2.2" fill="#eef6ff" stroke="#2a6aa8" stroke-width="1"/></g>
<line x1="667.5" y1="135" x2="667.5" y2="155" stroke="#c5c2b2"/><line x1="668.5" y1="135" x2="668.5" y2="155" stroke="#fff"/>
<g transform="translate(673.20,136.20) scale(1.1)"><line x1="0" y1="12" x2="16" y2="12" stroke="#000" stroke-width="1.4" /><line x1="8" y1="1" x2="8" y2="12" stroke="#000" stroke-width="1.4" /><circle cx="8" cy="12" r="2.2" fill="#eef6ff" stroke="#2a6aa8" stroke-width="1"/></g>
<g transform="translate(696.20,136.20) scale(1.1)"><line x1="1" y1="14" x2="11" y2="2" stroke="#000" stroke-width="1.8" /><line x1="6" y1="15" x2="15" y2="3" stroke="#000" stroke-width="1.8" /></g>
<g transform="translate(719.20,136.20) scale(1.1)"><rect x="3" y="2" width="10" height="5" fill="#e8ecc0" stroke="#445" stroke-width="1" /><circle cx="4" cy="10" r="3" fill="#eef6ff" stroke="#2a6aa8" stroke-width="1.2"/><circle cx="11" cy="11" r="3.6" fill="#c8e0b0" stroke="#456" stroke-width="1.2"/></g>
<g transform="translate(742.20,136.20) scale(1.1)"><circle cx="8" cy="9" r="2.4" fill="#eef6ff" stroke="#2a6aa8" stroke-width="1.2"/></g>
<line x1="765.5" y1="135" x2="765.5" y2="155" stroke="#c5c2b2"/><line x1="766.5" y1="135" x2="766.5" y2="155" stroke="#fff"/>
<g transform="translate(770.20,136.20) scale(1.1)"><line x1="1" y1="15" x2="12" y2="3" stroke="#000" stroke-width="1.6" /><line x1="8" y1="5" x2="14" y2="2" stroke="#000" stroke-width="1" /><circle cx="12.5" cy="9.5" r="2.4" fill="#eef6ff" stroke="#2a6aa8" stroke-width="1.1"/><line x1="7" y1="7" x2="11" y2="9" stroke="#000" stroke-width="1" /></g>
<g transform="translate(793.20,136.20) scale(1.1)"><path d="M2 14v-6a5 5 0 0 1 8-3" fill="none" stroke="#8a8a80" stroke-width="3" /><line x1="3" y1="15" x2="14" y2="2" stroke="#e01010" stroke-width="1.8" /><rect x="11" y="11" width="4" height="4" fill="#fff" stroke="#333" stroke-width="1" /></g>
<line x1="817.5" y1="135" x2="817.5" y2="155" stroke="#c5c2b2"/><line x1="818.5" y1="135" x2="818.5" y2="155" stroke="#fff"/>
<g transform="translate(822.20,136.20) scale(1.1)"><path d="M2.5 14v-7a4.5 4.5 0 0 1 9 0v7" fill="none" stroke="#c02030" stroke-width="3.2" /><rect x="1" y="12" width="3.2" height="3" fill="#888" stroke="none" stroke-width="0" /><rect x="10" y="12" width="3.2" height="3" fill="#888" stroke="none" stroke-width="0" /><rect x="13" y="12.5" width="3" height="3" fill="#fff" stroke="#333" stroke-width="0.9" /></g>
<line x1="846.5" y1="132" x2="846.5" y2="158" stroke="#bcb9aa"/><line x1="847.5" y1="132" x2="847.5" y2="158" stroke="#f6f5ee"/>
<line x1="852.5" y1="134" x2="852.5" y2="156" stroke="#fff"/><line x1="853.5" y1="134" x2="853.5" y2="156" stroke="#b4b1a2"/>
<line x1="856.5" y1="134" x2="856.5" y2="156" stroke="#fff"/><line x1="857.5" y1="134" x2="857.5" y2="156" stroke="#b4b1a2"/>
<g transform="translate(863.20,136.20) scale(1.1)"><circle cx="7" cy="10" r="4" fill="none" stroke="#000" stroke-width="1.3"/><line x1="2" y1="15" x2="13" y2="3" stroke="#000" stroke-width="1.2" /><line x1="13" y1="3" x2="16" y2="3" stroke="#000" stroke-width="1.2" /></g>
<g transform="translate(886.20,136.20) scale(1.1)"><circle cx="7" cy="10" r="4" fill="none" stroke="#000" stroke-width="1.3"/><line x1="2" y1="15" x2="13" y2="3" stroke="#000" stroke-width="1.2" /></g>
<g transform="translate(909.20,136.20) scale(1.1)"><circle cx="7" cy="10" r="5" fill="none" stroke="#000" stroke-width="1.3"/><line x1="2" y1="15" x2="13" y2="3" stroke="#000" stroke-width="1.2" /><line x1="13" y1="3" x2="16" y2="3" stroke="#000" stroke-width="1.2" /></g>
<g transform="translate(932.20,136.20) scale(1.1)"><circle cx="7" cy="10" r="5" fill="none" stroke="#000" stroke-width="1.3"/><line x1="2" y1="15" x2="13" y2="3" stroke="#000" stroke-width="1.2" /></g>
<g transform="translate(955.20,136.20) scale(1.1)"><circle cx="7" cy="10" r="4" fill="none" stroke="#000" stroke-width="1.3"/><line x1="2" y1="15" x2="13" y2="3" stroke="#000" stroke-width="1.2" /><line x1="13" y1="3" x2="16" y2="3" stroke="#000" stroke-width="1.2" /></g>
<g transform="translate(978.20,136.20) scale(1.1)"><circle cx="7" cy="10" r="4" fill="none" stroke="#000" stroke-width="1.3"/><line x1="2" y1="15" x2="13" y2="3" stroke="#000" stroke-width="1.2" /></g>
<g transform="translate(1001.20,136.20) scale(1.1)"><circle cx="7" cy="10" r="5" fill="none" stroke="#000" stroke-width="1.3"/><path d="M4 13l6-6M4 13v-2.5M4 13h2.5M10 7v2.5M10 7h-2.5" fill="none" stroke="#000" stroke-width="1" /></g>
<g transform="translate(1025.20,136.20) scale(1.1)"><circle cx="6" cy="7" r="4.5" fill="none" stroke="#000" stroke-width="1.2"/><circle cx="10" cy="10" r="4.5" fill="#ece9d8" stroke="#000" stroke-width="1.2"/><path d="M7 13l6-6" fill="none" stroke="#000" stroke-width="1" /></g>
<line x1="1049.5" y1="135" x2="1049.5" y2="155" stroke="#c5c2b2"/><line x1="1050.5" y1="135" x2="1050.5" y2="155" stroke="#fff"/>
<g transform="translate(1053.20,136.20) scale(1.1)"><path d="M1 5v10M14 5v10M1 10h13" fill="none" stroke="#000" stroke-width="1.3" /><path d="M5 5h6M6 2l4 4" fill="none" stroke="#000" stroke-width="1.1" /></g>
<g transform="translate(1077.20,136.20) scale(1.1)"><path d="M2 3l11 11M2 3v3M2 3h3M13 14v-3M13 14h-3" fill="none" stroke="#000" stroke-width="1.1" /><path d="M9 2l4 2-3 3" fill="none" stroke="#000" stroke-width="1" /><circle cx="12" cy="7" r="2" fill="none" stroke="#000" stroke-width="1"/></g>
<g transform="translate(1100.20,136.20) scale(1.1)"><path d="M5 2h6M6 5l5-4" fill="none" stroke="#000" stroke-width="1.1" /><circle cx="8" cy="5" r="2.5" fill="none" stroke="#000" stroke-width="1"/><path d="M6 12h9M15 12l-3-2v4z" fill="#000" stroke="#000" stroke-width="1" /><line x1="0" y1="12" x2="5" y2="12" stroke="#18c818" stroke-width="1.6" /></g>
<g transform="translate(1125.20,136.20) scale(1.1)"><path d="M3 2h6M4 5l5-4" fill="none" stroke="#000" stroke-width="1.1" /><circle cx="6" cy="5" r="2.5" fill="none" stroke="#000" stroke-width="1"/><path d="M8 12h5" fill="none" stroke="#000" stroke-width="1.1" /><path d="M8 12h8" fill="none" stroke="#18c818" stroke-width="1.8" /><path d="M16 12l-4-3v6z" fill="#18c818" stroke="#18c818" stroke-width="0.5" /></g>
<g transform="translate(1143.20,136.20) scale(1.1)"><path d="M2 6v9" fill="none" stroke="#000" stroke-width="1.3" /><text x="3" y="8" font-size="8" fill="#e01010" font-family="'Liberation Sans',sans-serif">0</text></g>
</svg>
<div id="canvas" class="abs"></div>
<svg class="abs" id="dwg" style="left:28px;top:160px" width="1080" height="593" viewBox="28 160 1080 593" font-family="'Liberation Sans','Noto Sans CJK SC',sans-serif">
<rect x="360.5" y="163.5" width="415.0" height="586.0" stroke="#ff0000" stroke-width="1" fill="none"/>
<rect x="380.5" y="183.5" width="375.0" height="547.0" stroke="#ff0000" stroke-width="1" fill="none"/>
<polyline points="380.5,197.5 435.5,197.5 435.5,183.5" stroke="#ff0000" stroke-width="1" fill="none" />
<line x1="462.5" y1="205" x2="462.5" y2="560" stroke="#ff0000" stroke-width="1" stroke-dasharray="14 2 2 2"/>
<polyline points="447.5,222 447.5,216 476.5,216 476.5,222" stroke="#ffffff" stroke-width="1" fill="none" />
<line x1="447" y1="216" x2="477" y2="216" stroke="#ffffff" stroke-width="2" />
<polyline points="436.5,386 436.5,222.5 488.5,222.5 488.5,386" stroke="#ffffff" stroke-width="1" fill="none" />
<line x1="436" y1="250" x2="488" y2="250" stroke="#ffffff" stroke-width="2" />
<line x1="432" y1="275.5" x2="492" y2="275.5" stroke="#ffffff" stroke-width="1.5" />
<line x1="432" y1="277.5" x2="492" y2="277.5" stroke="#ff0000" stroke-width="1" />
<path d="M438.5 262.5h-4a3 3 0 0 0 -3 3v6a2 2 0 0 0 2 2" stroke="#fff" fill="none" stroke-width="1.4"/>
<path d="M486.5 262.5h4a3 3 0 0 1 3 3v6a2 2 0 0 1 -2 2" stroke="#fff" fill="none" stroke-width="1.4"/>
<rect x="491.5" y="280.5" width="4.0" height="7.0" stroke="#ffffff" stroke-width="1" fill="none"/>
<line x1="493.5" y1="288" x2="493.5" y2="296" stroke="#ffffff" stroke-width="2.4" />
<circle cx="492.5" cy="269.5" r="1.6" stroke="#ffffff" stroke-width="1.6" fill="none" />
<polyline points="436.5,386.5 430.5,386.5 425.5,392.5 425.5,560" stroke="#ffffff" stroke-width="1" fill="none" />
<polyline points="488.5,386.5 493.5,386.5 498.5,392.5 498.5,474" stroke="#ffffff" stroke-width="1" fill="none" />
<polyline points="495.5,394.5 495.5,474" stroke="#ffffff" stroke-width="1" fill="none" />
<line x1="436.5" y1="386" x2="436.5" y2="470" stroke="#ffffff" stroke-width="1" />
<line x1="488.5" y1="386" x2="488.5" y2="470" stroke="#ffffff" stroke-width="1" />
<polyline points="419.5,430.5 427.5,430.5" stroke="#ffffff" stroke-width="1" fill="none" />
<polyline points="419.5,430.5 419.5,470.5 437.5,474.5" stroke="#ffffff" stroke-width="1" fill="none" />
<polyline points="437,474.5 488,474.5" stroke="#ffffff" stroke-width="1" fill="none" />
<polyline points="437.5,474.5 458.5,510.5" stroke="#ffffff" stroke-width="1" fill="none" />
<polyline points="488.5,474.5 466.5,510.5" stroke="#ffffff" stroke-width="1" fill="none" />
<polyline points="458.5,510.5 458.5,550.5 466.5,542.5 466.5,510.5 458.5,510.5" stroke="#ffffff" stroke-width="1" fill="none" />
<line x1="497.5" y1="474" x2="497.5" y2="514" stroke="#ffffff" stroke-width="1" />
<rect x="495.5" y="514.5" width="4.0" height="4.0" stroke="#ffffff" stroke-width="1" fill="none"/>
<rect x="442.5" y="518.5" width="78.0" height="39.0" stroke="#ffffff" stroke-width="1" fill="none"/>
<line x1="429.5" y1="394" x2="429.5" y2="560" stroke="#ffffff" stroke-width="1" />
<rect x="421.5" y="525.5" width="16.0" height="4.0" stroke="#ffffff" stroke-width="1" fill="none"/>
<rect x="419.5" y="529.5" width="14.0" height="2.0" stroke="#ffffff" stroke-width="1" fill="none"/>
<rect x="421.5" y="553.5" width="16.0" height="4.0" stroke="#ffffff" stroke-width="1" fill="none"/>
<rect x="419.5" y="557.5" width="14.0" height="3.0" stroke="#ffffff" stroke-width="1" fill="none"/>
<line x1="437" y1="556" x2="442" y2="556" stroke="#ffffff" stroke-width="1" />
<rect x="442.5" y="557.5" width="4.0" height="5.0" stroke="#ffffff" stroke-width="1" fill="none"/>
<rect x="516.5" y="557.5" width="4.0" height="5.0" stroke="#ffffff" stroke-width="1" fill="none"/>
<line x1="520" y1="549.5" x2="527" y2="549.5" stroke="#ffffff" stroke-width="1" />
<line x1="520" y1="551.5" x2="527" y2="551.5" stroke="#ffffff" stroke-width="1" />
<rect x="527.5" y="541.5" width="2.0" height="14.0" stroke="#ffffff" stroke-width="1" fill="none"/>
<rect x="531.5" y="546.5" width="11.0" height="7.0" stroke="#ffffff" stroke-width="1" fill="none"/>
<polyline points="533.5,553.5 530.5,562.5 540.5,562.5 537.5,553.5" stroke="#ffffff" stroke-width="1" fill="none" />
<line x1="528.5" y1="541" x2="528.5" y2="536" stroke="#ffffff" stroke-width="2" />
<path d="M452 498 Q462.5 490 473 498" stroke="#f00" fill="none"/>
<line x1="445.5" y1="196" x2="445.5" y2="216" stroke="#ff0000" stroke-width="1" />
<line x1="479.5" y1="196" x2="479.5" y2="216" stroke="#ff0000" stroke-width="1" />
<line x1="445" y1="201.5" x2="480" y2="201.5" stroke="#ff0000" stroke-width="1" />
<line x1="445" y1="206.5" x2="480" y2="206.5" stroke="#ff0000" stroke-width="1" />
<line x1="445" y1="211.5" x2="480" y2="211.5" stroke="#ff0000" stroke-width="1" />
<line x1="476" y1="215.5" x2="576" y2="215.5" stroke="#ff0000" stroke-width="1" />
<line x1="570.5" y1="215" x2="570.5" y2="562" stroke="#ff0000" stroke-width="1" />
<line x1="488" y1="222.5" x2="505" y2="222.5" stroke="#ff0000" stroke-width="1" />
<line x1="499.5" y1="222" x2="499.5" y2="276" stroke="#ff0000" stroke-width="1" />
<line x1="488" y1="250.5" x2="524" y2="250.5" stroke="#ff0000" stroke-width="1" />
<line x1="508.5" y1="250" x2="508.5" y2="474" stroke="#ff0000" stroke-width="1" />
<line x1="518.5" y1="250" x2="518.5" y2="520" stroke="#ff0000" stroke-width="1" />
<line x1="488" y1="262.5" x2="505" y2="262.5" stroke="#ff0000" stroke-width="1" />
<line x1="488" y1="275.5" x2="505" y2="275.5" stroke="#ff0000" stroke-width="1" />
<line x1="480" y1="215" x2="488" y2="200" stroke="#ff0000" stroke-width="1" />
<line x1="488" y1="200.5" x2="496" y2="200.5" stroke="#ff0000" stroke-width="1" />
<line x1="491.5" y1="209" x2="491.5" y2="228" stroke="#ff0000" stroke-width="1" />
<line x1="436" y1="453.5" x2="488" y2="453.5" stroke="#ff0000" stroke-width="1" />
<line x1="394" y1="394.5" x2="431" y2="394.5" stroke="#ff0000" stroke-width="1" />
<line x1="493" y1="394.5" x2="530" y2="394.5" stroke="#ff0000" stroke-width="1" />
<line x1="398.5" y1="394" x2="398.5" y2="562" stroke="#ff0000" stroke-width="1" />
<line x1="412.5" y1="437" x2="412.5" y2="470" stroke="#ff0000" stroke-width="1" />
<line x1="405" y1="437.5" x2="428" y2="437.5" stroke="#ff0000" stroke-width="1" />
<line x1="405" y1="453.5" x2="500" y2="453.5" stroke="#ff0000" stroke-width="1" />
<line x1="400" y1="474.5" x2="520" y2="474.5" stroke="#ff0000" stroke-width="1" />
<line x1="394" y1="562.5" x2="576" y2="562.5" stroke="#ff0000" stroke-width="1" />
<line x1="404.5" y1="520" x2="404.5" y2="562" stroke="#ff0000" stroke-width="1" />
<line x1="394" y1="536.5" x2="440" y2="536.5" stroke="#ff0000" stroke-width="1" />
<line x1="394" y1="567.5" x2="446" y2="567.5" stroke="#ff0000" stroke-width="1" />
<line x1="421.5" y1="560" x2="421.5" y2="572" stroke="#ff0000" stroke-width="1" />
<line x1="427.5" y1="560" x2="427.5" y2="572" stroke="#ff0000" stroke-width="1" />
<line x1="433.5" y1="560" x2="433.5" y2="572" stroke="#ff0000" stroke-width="1" />
<line x1="441.5" y1="560" x2="441.5" y2="572" stroke="#ff0000" stroke-width="1" />
<line x1="471" y1="474" x2="471" y2="520" stroke="#ff0000" stroke-width="1" />
<line x1="489.5" y1="474" x2="489.5" y2="500" stroke="#ff0000" stroke-width="1" />
<line x1="466" y1="523.5" x2="478" y2="523.5" stroke="#ff0000" stroke-width="1" />
<line x1="474.5" y1="516" x2="474.5" y2="546" stroke="#ff0000" stroke-width="1" />
<line x1="466" y1="546.5" x2="480" y2="546.5" stroke="#ff0000" stroke-width="1" />
<line x1="520" y1="518.5" x2="566" y2="518.5" stroke="#ff0000" stroke-width="1" />
<line x1="555.5" y1="518" x2="555.5" y2="562" stroke="#ff0000" stroke-width="1" />
<line x1="561.5" y1="518" x2="561.5" y2="562" stroke="#ff0000" stroke-width="1" />
<line x1="500" y1="513.5" x2="520" y2="513.5" stroke="#ff0000" stroke-width="1" />
<line x1="436" y1="330.5" x2="488" y2="330.5" stroke="#ff0000" stroke-width="1" />
<line x1="440" y1="262.5" x2="462" y2="262.5" stroke="#ff0000" stroke-width="1" stroke-dasharray="3 2"/>
<line x1="446" y1="263" x2="460" y2="268" stroke="#ff0000" stroke-width="1" />
<path d="M493.5 292 L531 372 C538 390 540 420 536.5 445 C533 480 530 510 528 537" stroke="#00ff00" stroke-width="2.6" fill="none" stroke-dasharray="2.2 0.9"/>
<line x1="392" y1="226" x2="436" y2="250" stroke="#00ff00" stroke-width="1" />
<line x1="392" y1="248.5" x2="431.5" y2="268.5" stroke="#00ff00" stroke-width="1" />
<line x1="391" y1="300.5" x2="431.5" y2="277" stroke="#00ff00" stroke-width="1" />
<line x1="415" y1="212" x2="439" y2="228" stroke="#00ff00" stroke-width="1" />
<line x1="389" y1="351" x2="430" y2="388" stroke="#00ff00" stroke-width="1" />
<line x1="389" y1="386" x2="440" y2="410" stroke="#00ff00" stroke-width="1" />
<line x1="389" y1="414" x2="427" y2="430" stroke="#00ff00" stroke-width="1" />
<line x1="391" y1="481" x2="442" y2="518" stroke="#00ff00" stroke-width="1" />
<line x1="392" y1="508" x2="421" y2="526.5" stroke="#00ff00" stroke-width="1" />
<line x1="392" y1="534" x2="421" y2="553" stroke="#00ff00" stroke-width="1" />
<line x1="550" y1="365" x2="535" y2="381" stroke="#00ff00" stroke-width="1" />
<line x1="494" y1="291" x2="530" y2="307" stroke="#00ff00" stroke-width="1" />
<line x1="557" y1="505" x2="541" y2="546" stroke="#00ff00" stroke-width="1" />
<line x1="391.5" y1="205" x2="391.5" y2="226" stroke="#00ff00" stroke-width="1" />
<line x1="391.5" y1="229" x2="391.5" y2="249" stroke="#00ff00" stroke-width="1" />
<line x1="385" y1="211.5" x2="392" y2="211.5" stroke="#00ff00" stroke-width="1" />
<line x1="385" y1="218.5" x2="392" y2="218.5" stroke="#00ff00" stroke-width="1" />
<line x1="385" y1="225.5" x2="392" y2="225.5" stroke="#00ff00" stroke-width="1" />
<line x1="385" y1="235.5" x2="392" y2="235.5" stroke="#00ff00" stroke-width="1" />
<line x1="385" y1="242.5" x2="392" y2="242.5" stroke="#00ff00" stroke-width="1" />
<line x1="385" y1="248.5" x2="392" y2="248.5" stroke="#00ff00" stroke-width="1" />
<line x1="408" y1="212.5" x2="415" y2="212.5" stroke="#00ff00" stroke-width="1" />
<line x1="386" y1="300.5" x2="392" y2="300.5" stroke="#00ff00" stroke-width="1" />
<line x1="391.5" y1="488" x2="391.5" y2="508" stroke="#00ff00" stroke-width="1" />
<line x1="391.5" y1="514" x2="391.5" y2="534" stroke="#00ff00" stroke-width="1" />
<line x1="385" y1="494.5" x2="392" y2="494.5" stroke="#00ff00" stroke-width="1" />
<line x1="385" y1="501.5" x2="392" y2="501.5" stroke="#00ff00" stroke-width="1" />
<line x1="385" y1="508.5" x2="392" y2="508.5" stroke="#00ff00" stroke-width="1" />
<line x1="385" y1="520.5" x2="392" y2="520.5" stroke="#00ff00" stroke-width="1" />
<line x1="385" y1="527.5" x2="392" y2="527.5" stroke="#00ff00" stroke-width="1" />
<line x1="385" y1="534.5" x2="392" y2="534.5" stroke="#00ff00" stroke-width="1" />
<line x1="557.5" y1="484" x2="557.5" y2="505" stroke="#00ff00" stroke-width="1" />
<line x1="532.5" y1="294" x2="532.5" y2="318" stroke="#00ff00" stroke-width="1" />
<text x="455" y="200" fill="#00ff00" font-size="5"  font-weight="bold">Ø534</text>
<text x="455" y="205" fill="#00ff00" font-size="5"  font-weight="bold">Ø500</text>
<text x="452" y="211" fill="#00ff00" font-size="5"  font-weight="bold">Ø470.2</text>
<text x="487" y="201" fill="#00ff00" font-size="5"  font-weight="bold">15-Ø5</text>
<text x="409" y="211" fill="#00ff00" font-size="7"  font-weight="bold">15</text>
<text x="385" y="210.5" fill="#00ff00" font-size="5.5"  font-weight="bold">16</text>
<text x="385" y="217.5" fill="#00ff00" font-size="5.5"  font-weight="bold">14</text>
<text x="385" y="224.5" fill="#00ff00" font-size="5.5"  font-weight="bold">13</text>
<text x="385" y="234.5" fill="#00ff00" font-size="5.5"  font-weight="bold">12</text>
<text x="385" y="241.5" fill="#00ff00" font-size="5.5"  font-weight="bold">11</text>
<text x="385" y="247.5" fill="#00ff00" font-size="5.5"  font-weight="bold">10</text>
<text x="387" y="300" fill="#00ff00" font-size="7"  font-weight="bold">1</text>
<text x="387" y="349" fill="#00ff00" font-size="6"  font-weight="bold">2</text>
<text x="387" y="384" fill="#00ff00" font-size="6"  font-weight="bold">4</text>
<text x="387" y="412" fill="#00ff00" font-size="6"  font-weight="bold">3</text>
<text x="387" y="479" fill="#00ff00" font-size="6"  font-weight="bold">1</text>
<text x="387" y="494" fill="#00ff00" font-size="5.5"  font-weight="bold">5</text>
<text x="387" y="501" fill="#00ff00" font-size="5.5"  font-weight="bold">6</text>
<text x="387" y="508" fill="#00ff00" font-size="5.5"  font-weight="bold">7</text>
<text x="387" y="520" fill="#00ff00" font-size="5.5"  font-weight="bold">8</text>
<text x="387" y="527" fill="#00ff00" font-size="5.5"  font-weight="bold">9</text>
<text x="387" y="534" fill="#00ff00" font-size="5.5"  font-weight="bold">4</text>
<text x="485.5" y="222" fill="#00ff00" font-size="5.5"  font-weight="bold">60</text>
<text x="453" y="329" fill="#00ff00" font-size="5"  font-weight="bold">Ø790.2</text>
<text x="549" y="364" fill="#00ff00" font-size="6"  font-weight="bold">16</text>
<text x="449" y="265" fill="#00ff00" font-size="5"  font-weight="bold">45°</text>
<text x="458" y="492" fill="#00ff00" font-size="5"  font-weight="bold">60°</text>
<text x="404" y="453" fill="#00ff00" font-size="5"  font-weight="bold">65</text>
<text x="404" y="467" fill="#00ff00" font-size="5"  font-weight="bold">G1</text>
<text x="558" y="489" fill="#00ff00" font-size="6"  font-weight="bold">19</text>
<text x="558" y="496" fill="#00ff00" font-size="6"  font-weight="bold">18</text>
<text x="558" y="503" fill="#00ff00" font-size="6"  font-weight="bold">17</text>
<text x="468" y="521" fill="#00ff00" font-size="5"  font-weight="bold">89</text>
<text x="476" y="536" fill="#00ff00" font-size="5"  font-weight="bold">60</text>
<text x="469" y="548" fill="#00ff00" font-size="5"  font-weight="bold">45°</text>
<text x="445" y="557" fill="#00ff00" font-size="5"  font-weight="bold">60</text>
<text x="403" y="560" fill="#00ff00" font-size="5"  font-weight="bold">90</text>
<text x="421" y="570" fill="#00ff00" font-size="5"  font-weight="bold">60</text>
<text x="433" y="570" fill="#00ff00" font-size="5"  font-weight="bold">60</text>
<text x="423" y="535" fill="#00ff00" font-size="5"  font-weight="bold">60</text>
<text x="437" y="535" fill="#00ff00" font-size="5"  font-weight="bold">60</text>
<text x="514" y="560" fill="#00ff00" font-size="5"  font-weight="bold">50</text>
<text x="531" y="541" fill="#00ff00" font-size="5"  font-weight="bold">65</text>
<text x="509" y="245" fill="#00ff00" font-size="4.8" font-weight="bold" font-style="italic" textLength="28" lengthAdjust="spacingAndGlyphs">30×管箍螺纹G2''</text>
<text transform="translate(498.5,240) rotate(-90)" fill="#00ff00" font-size="5" font-weight="bold">80</text>
<text transform="translate(498.5,261) rotate(-90)" fill="#00ff00" font-size="5" font-weight="bold">40</text>
<text transform="translate(498.5,273.5) rotate(-90)" fill="#00ff00" font-size="5" font-weight="bold">40</text>
<text transform="translate(517,328) rotate(-90)" fill="#00ff00" font-size="5" font-weight="bold">2580</text>
<text transform="translate(507,370) rotate(-90)" fill="#00ff00" font-size="5" font-weight="bold">706</text>
<text transform="translate(569.5,400) rotate(-90)" fill="#00ff00" font-size="5" font-weight="bold">3850</text>
<text transform="translate(517,465) rotate(-90)" fill="#00ff00" font-size="5" font-weight="bold">300</text>
<text transform="translate(471,470) rotate(-90)" fill="#00ff00" font-size="5" font-weight="bold">160</text>
<text transform="translate(403,510) rotate(-90)" fill="#00ff00" font-size="5" font-weight="bold">250</text>
<text transform="translate(489,494) rotate(-90)" fill="#00ff00" font-size="5" font-weight="bold">120</text>
<text transform="translate(554,545) rotate(-90)" fill="#00ff00" font-size="5" font-weight="bold">210</text>
<text transform="translate(561,548) rotate(-90)" fill="#00ff00" font-size="5" font-weight="bold">165</text>
<text transform="translate(536,313) rotate(-90)" fill="#00ff00" font-size="5" font-weight="bold">9 8 7 4</text>
<polyline points="470,615.5 520.5,615.5 520.5,692.5" stroke="#ffffff" stroke-width="1" fill="none" />
<line x1="442.5" y1="615.5" x2="470" y2="615.5" stroke="#ffffff" stroke-width="1" />
<line x1="442.5" y1="615" x2="442.5" y2="645" stroke="#ffffff" stroke-width="1" />
<line x1="488.5" y1="692.5" x2="541" y2="692.5" stroke="#ffffff" stroke-width="1" />
<line x1="488.5" y1="680" x2="488.5" y2="710" stroke="#ffffff" stroke-width="1" />
<line x1="469.5" y1="692" x2="469.5" y2="710" stroke="#ffffff" stroke-width="1" />
<line x1="469" y1="709.5" x2="489" y2="709.5" stroke="#ffffff" stroke-width="1" />
<line x1="495.5" y1="615" x2="495.5" y2="692" stroke="#ffffff" stroke-width="1" />
<line x1="498.5" y1="615" x2="498.5" y2="692" stroke="#ffffff" stroke-width="1" />
<line x1="497" y1="615" x2="497" y2="692" stroke="#ff0000" stroke-width="1" stroke-dasharray="2 1"/>
<line x1="504.5" y1="615" x2="504.5" y2="692" stroke="#ffffff" stroke-width="1" />
<rect x="503.5" y="625.5" width="2.0" height="6.0" stroke="#ffffff" stroke-width="1" fill="#fff"/>
<rect x="503.5" y="678.5" width="2.0" height="6.0" stroke="#ffffff" stroke-width="1" fill="#fff"/>
<circle cx="462.5" cy="666.5" r="30.5" stroke="#ffffff" stroke-width="1" fill="none" />
<circle cx="462.5" cy="666.5" r="28" stroke="#ffffff" stroke-width="1" fill="none" />
<circle cx="462.5" cy="666.5" r="24.5" stroke="#ffffff" stroke-width="1" fill="none" />
<circle cx="462.5" cy="666.5" r="26.3" stroke="#ff0000" stroke-width="1" fill="none" />
<circle cx="462.5" cy="666.5" r="12.5" stroke="#ffffff" stroke-width="1" fill="none" />
<circle cx="462.5" cy="666.5" r="9.5" stroke="#ffffff" stroke-width="1" fill="none" />
<line x1="462.5" y1="632" x2="462.5" y2="703" stroke="#ff0000" stroke-width="1" stroke-dasharray="8 2 2 2"/>
<line x1="412" y1="666.5" x2="500" y2="666.5" stroke="#ff0000" stroke-width="1" stroke-dasharray="8 2 2 2"/>
<line x1="484.3" y1="676.6" x2="487.7" y2="682.8" stroke="#ff0000" stroke-width="2" />
<line x1="470.7" y1="689.1" x2="468.7" y2="695.8" stroke="#ff0000" stroke-width="2" />
<line x1="452.4" y1="688.3" x2="446.2" y2="691.7" stroke="#ff0000" stroke-width="2" />
<line x1="439.9" y1="674.7" x2="433.2" y2="672.7" stroke="#ff0000" stroke-width="2" />
<line x1="440.7" y1="656.4" x2="437.3" y2="650.2" stroke="#ff0000" stroke-width="2" />
<line x1="454.3" y1="643.9" x2="456.3" y2="637.2" stroke="#ff0000" stroke-width="2" />
<line x1="472.6" y1="644.7" x2="478.8" y2="641.3" stroke="#ff0000" stroke-width="2" />
<line x1="485.1" y1="658.3" x2="491.8" y2="660.3" stroke="#ff0000" stroke-width="2" />
<rect x="425.5" y="663.5" width="6.0" height="6.0" stroke="#ffffff" stroke-width="1" fill="#fff"/>
<rect x="494.5" y="663.5" width="5.0" height="6.0" stroke="#ffffff" stroke-width="1" fill="#fff"/>
<rect x="450.5" y="593.5" width="6.0" height="10.0" stroke="#ffffff" stroke-width="1" fill="none"/>
<line x1="453.5" y1="594" x2="453.5" y2="603" stroke="#ffffff" stroke-width="1" />
<ellipse cx="453.5" cy="607.5" rx="8" ry="2" stroke="#fff" fill="none"/>
<line x1="453.5" y1="609" x2="453.5" y2="615" stroke="#ffffff" stroke-width="2" />
<polyline points="520.5,630.5 536,630.5 538,632.5 544,632.5" stroke="#ffffff" stroke-width="1" fill="none" />
<line x1="527" y1="634.5" x2="544" y2="634.5" stroke="#ffffff" stroke-width="2" />
<polyline points="520.5,678.5 536,678.5 538,680.5 544,680.5" stroke="#ffffff" stroke-width="1" fill="none" />
<line x1="527" y1="682.5" x2="544" y2="682.5" stroke="#ffffff" stroke-width="2" />
<line x1="442.5" y1="583" x2="442.5" y2="615" stroke="#ff0000" stroke-width="1" />
<line x1="520.5" y1="583" x2="520.5" y2="615" stroke="#ff0000" stroke-width="1" />
<line x1="442" y1="589.5" x2="521" y2="589.5" stroke="#ff0000" stroke-width="1" />
<line x1="495.5" y1="600" x2="495.5" y2="615" stroke="#ff0000" stroke-width="1" />
<line x1="495" y1="607.5" x2="521" y2="607.5" stroke="#ff0000" stroke-width="1" />
<line x1="520" y1="615.5" x2="556" y2="615.5" stroke="#ff0000" stroke-width="1" />
<line x1="520" y1="692.5" x2="556" y2="692.5" stroke="#ff0000" stroke-width="1" />
<line x1="550.5" y1="615" x2="550.5" y2="692" stroke="#ff0000" stroke-width="1" />
<line x1="418.5" y1="666" x2="418.5" y2="692" stroke="#ff0000" stroke-width="1" />
<line x1="410" y1="692.5" x2="445" y2="692.5" stroke="#ff0000" stroke-width="1" />
<line x1="443.5" y1="690" x2="443.5" y2="720" stroke="#ff0000" stroke-width="1" />
<line x1="462.5" y1="700" x2="462.5" y2="704" stroke="#ff0000" stroke-width="1" />
<line x1="443" y1="702.5" x2="463" y2="702.5" stroke="#ff0000" stroke-width="1" />
<line x1="443" y1="713.5" x2="480" y2="713.5" stroke="#ff0000" stroke-width="1" />
<line x1="478.5" y1="690" x2="478.5" y2="728" stroke="#ff0000" stroke-width="1" />
<line x1="469.5" y1="710" x2="469.5" y2="728" stroke="#ff0000" stroke-width="1" />
<line x1="488.5" y1="710" x2="488.5" y2="728" stroke="#ff0000" stroke-width="1" />
<line x1="469" y1="722.5" x2="489" y2="722.5" stroke="#ff0000" stroke-width="1" />
<line x1="504.5" y1="692" x2="504.5" y2="707" stroke="#ff0000" stroke-width="1" />
<line x1="520.5" y1="692" x2="520.5" y2="707" stroke="#ff0000" stroke-width="1" />
<line x1="504" y1="701.5" x2="521" y2="701.5" stroke="#ff0000" stroke-width="1" />
<line x1="442" y1="615" x2="442" y2="640" stroke="#ff0000" stroke-width="1" />
<line x1="442" y1="627.5" x2="456" y2="627.5" stroke="#ff0000" stroke-width="1" />
<text x="477" y="588" fill="#00ff00" font-size="5"  font-weight="bold">1220</text>
<text x="502" y="606" fill="#00ff00" font-size="5"  font-weight="bold">387.5</text>
<text x="445" y="626" fill="#00ff00" font-size="5"  font-weight="bold">245</text>
<text x="449" y="701" fill="#00ff00" font-size="5"  font-weight="bold">280</text>
<text x="457" y="712" fill="#00ff00" font-size="5"  font-weight="bold">520</text>
<text x="475" y="721" fill="#00ff00" font-size="5"  font-weight="bold">265</text>
<text x="508" y="700" fill="#00ff00" font-size="5"  font-weight="bold">320</text>
<text x="443" y="662" fill="#00ff00" font-size="5"  font-weight="bold">45°</text>
<text transform="translate(420,684) rotate(-90)" fill="#00ff00" font-size="5" font-weight="bold">400</text>
<text transform="translate(554,660) rotate(-90)" fill="#00ff00" font-size="5" font-weight="bold">780</text>
<text transform="translate(527,626) rotate(-90)" fill="#00ff00" font-size="5" font-weight="bold">70</text>
<text transform="translate(527,690) rotate(-90)" fill="#00ff00" font-size="5" font-weight="bold">70</text>
<text x="654" y="292" fill="#00ff00" font-size="4.6"  font-weight="bold">技术要求</text>
<text x="634" y="298.5" fill="#00ff00" font-size="4.4" font-weight="bold" textLength="66" lengthAdjust="spacingAndGlyphs">1.制造、验收应符合钢制焊接容器技术条件的规定。</text>
<text x="634" y="303.9" fill="#00ff00" font-size="4.4" font-weight="bold" textLength="54" lengthAdjust="spacingAndGlyphs">2.焊缝应连续、平整，无夹渣、气孔等缺陷。</text>
<text x="634" y="309.3" fill="#00ff00" font-size="4.4" font-weight="bold" textLength="75" lengthAdjust="spacingAndGlyphs">3.水槽及筒体应做盛水试验，不得有渗漏现象，水压0.2MPa。</text>
<text x="634" y="314.7" fill="#00ff00" font-size="4.4" font-weight="bold" textLength="46" lengthAdjust="spacingAndGlyphs">4.进水管、喷嘴安装后应畅通。</text>
<text x="634" y="320.1" fill="#00ff00" font-size="4.4" font-weight="bold" textLength="36" lengthAdjust="spacingAndGlyphs">5.外表面涂防锈漆两遍。</text>
<text x="634" y="325.5" fill="#00ff00" font-size="4.4" font-weight="bold" textLength="22" lengthAdjust="spacingAndGlyphs">6.内壁涂沥青漆。</text>
<text x="634" y="330.9" fill="#00ff00" font-size="4.4" font-weight="bold" textLength="24" lengthAdjust="spacingAndGlyphs">7.未注公差按IT14。</text>
<text x="655.5" y="356.5" fill="#00ff00" font-size="6.5"  font-weight="bold">I</text>
<line x1="651" y1="359.5" x2="663" y2="359.5" stroke="#ff0000" stroke-width="1" />
<text x="654" y="364" fill="#00ff00" font-size="3.8"  font-weight="bold">1:5</text>
<circle cx="657" cy="385.5" r="14" stroke="#ff0000" stroke-width="1" fill="none" />
<line x1="642" y1="385.5" x2="667" y2="385.5" stroke="#ffffff" stroke-width="1.6" />
<line x1="666.5" y1="375" x2="666.5" y2="386" stroke="#ffffff" stroke-width="1" />
<line x1="647.5" y1="385.5" x2="647.5" y2="399" stroke="#ffffff" stroke-width="1" />
<line x1="663.5" y1="385.5" x2="663.5" y2="399" stroke="#ffffff" stroke-width="1" />
<line x1="647" y1="381.5" x2="666" y2="381.5" stroke="#ff0000" stroke-width="1" />
<line x1="648" y1="388.5" x2="682" y2="388.5" stroke="#ff0000" stroke-width="1" stroke-dasharray="3 1"/>
<line x1="675.5" y1="379" x2="675.5" y2="394" stroke="#ff0000" stroke-width="1" />
<text x="652.5" y="380.5" fill="#00ff00" font-size="4.6"  font-weight="bold">Ø34</text>
<text x="671" y="389.5" fill="#00ff00" font-size="4.2"  font-weight="bold">10</text>
<rect x="655.5" y="461.5" width="9.0" height="6.0" stroke="#ffffff" stroke-width="1" fill="none"/>
<line x1="657" y1="463" x2="663" y2="466" stroke="#ff0000" stroke-width="1.5" />
<line x1="655.5" y1="467" x2="655.5" y2="488" stroke="#ff0000" stroke-width="1" />
<line x1="664.5" y1="467" x2="664.5" y2="488" stroke="#ff0000" stroke-width="1" />
<line x1="660.5" y1="469" x2="660.5" y2="476" stroke="#00ff00" stroke-width="1.6" />
<line x1="664" y1="467.5" x2="677" y2="467.5" stroke="#ff0000" stroke-width="1" />
<line x1="655" y1="472.5" x2="672" y2="472.5" stroke="#ff0000" stroke-width="1" />
<line x1="655" y1="482.5" x2="666" y2="482.5" stroke="#ff0000" stroke-width="1" />
<text x="666" y="466" fill="#00ff00" font-size="5"  font-weight="bold">12</text>
<text x="656.5" y="482" fill="#00ff00" font-size="4.8"  font-weight="bold">140</text>
<text x="653.5" y="494" fill="#00ff00" font-size="5" textLength="15" lengthAdjust="spacingAndGlyphs" font-weight="bold">(Ø8钢筋)</text>
<line x1="580.5" y1="544.5" x2="754.5" y2="544.5" stroke="#ffffff" stroke-width="1" />
<line x1="580.5" y1="551.5" x2="754.5" y2="551.5" stroke="#ff0000" stroke-width="1" />
<line x1="580.5" y1="558.5" x2="754.5" y2="558.5" stroke="#ff0000" stroke-width="1" />
<line x1="580.5" y1="565.5" x2="754.5" y2="565.5" stroke="#ff0000" stroke-width="1" />
<line x1="580.5" y1="571.5" x2="754.5" y2="571.5" stroke="#ff0000" stroke-width="1" />
<line x1="580.5" y1="578.5" x2="754.5" y2="578.5" stroke="#ff0000" stroke-width="1" />
<line x1="580.5" y1="585.5" x2="754.5" y2="585.5" stroke="#ff0000" stroke-width="1" />
<line x1="580.5" y1="592.5" x2="754.5" y2="592.5" stroke="#ff0000" stroke-width="1" />
<line x1="580.5" y1="598.5" x2="754.5" y2="598.5" stroke="#ff0000" stroke-width="1" />
<line x1="580.5" y1="605.5" x2="754.5" y2="605.5" stroke="#ff0000" stroke-width="1" />
<line x1="580.5" y1="612.5" x2="754.5" y2="612.5" stroke="#ff0000" stroke-width="1" />
<line x1="580.5" y1="619.5" x2="754.5" y2="619.5" stroke="#ff0000" stroke-width="1" />
<line x1="580.5" y1="625.5" x2="754.5" y2="625.5" stroke="#ff0000" stroke-width="1" />
<line x1="580.5" y1="632.5" x2="754.5" y2="632.5" stroke="#ff0000" stroke-width="1" />
<line x1="580.5" y1="639.5" x2="754.5" y2="639.5" stroke="#ff0000" stroke-width="1" />
<line x1="580.5" y1="646.5" x2="754.5" y2="646.5" stroke="#ff0000" stroke-width="1" />
<line x1="580.5" y1="652.5" x2="754.5" y2="652.5" stroke="#ff0000" stroke-width="1" />
<line x1="580.5" y1="659.5" x2="754.5" y2="659.5" stroke="#ff0000" stroke-width="1" />
<line x1="580.5" y1="666.5" x2="754.5" y2="666.5" stroke="#ff0000" stroke-width="1" />
<line x1="580.5" y1="672.5" x2="754.5" y2="672.5" stroke="#ffffff" stroke-width="1" />
<line x1="580.5" y1="544" x2="580.5" y2="685" stroke="#ffffff" stroke-width="1" />
<line x1="590.5" y1="544" x2="590.5" y2="685" stroke="#ffffff" stroke-width="1" />
<line x1="631.5" y1="544" x2="631.5" y2="685" stroke="#ffffff" stroke-width="1" />
<line x1="668.5" y1="544" x2="668.5" y2="685" stroke="#ffffff" stroke-width="1" />
<line x1="678.5" y1="544" x2="678.5" y2="685" stroke="#ffffff" stroke-width="1" />
<line x1="705.5" y1="544" x2="705.5" y2="685" stroke="#ffffff" stroke-width="1" />
<line x1="722.5" y1="544" x2="722.5" y2="685" stroke="#ffffff" stroke-width="1" />
<line x1="738.5" y1="544" x2="738.5" y2="685" stroke="#ffffff" stroke-width="1" />
<line x1="754.5" y1="544" x2="754.5" y2="685" stroke="#ffffff" stroke-width="1" />
<line x1="580.5" y1="685.5" x2="754.5" y2="685.5" stroke="#ffffff" stroke-width="1" />
<text x="581.3" y="550.8" fill="#00ff00" font-size="7.4" textLength="8" lengthAdjust="spacingAndGlyphs" font-weight="bold">19</text>
<text x="591.5" y="550.8" fill="#00ff00" font-size="7.4" textLength="35" lengthAdjust="spacingAndGlyphs" font-weight="bold">CLS793-10</text>
<text x="632.5" y="550.8" fill="#00ff00" font-size="6.8" font-weight="bold" textLength="35" lengthAdjust="spacingAndGlyphs">喷嘴管DN25</text>
<text x="671" y="550.8" fill="#00ff00" font-size="7.4" textLength="4" lengthAdjust="spacingAndGlyphs" font-weight="bold">1</text>
<text x="679.5" y="550.8" fill="#00ff00" font-size="7.2" textLength="21" lengthAdjust="spacingAndGlyphs" font-weight="bold">Q235-A</text>
<text x="581.3" y="557.8" fill="#00ff00" font-size="7.4" textLength="8" lengthAdjust="spacingAndGlyphs" font-weight="bold">18</text>
<text x="632.5" y="557.8" fill="#00ff00" font-size="6.8" font-weight="bold" textLength="28" lengthAdjust="spacingAndGlyphs">管箍DN25</text>
<text x="671" y="557.8" fill="#00ff00" font-size="7.4" textLength="4" lengthAdjust="spacingAndGlyphs" font-weight="bold">2</text>
<text x="679.5" y="557.8" fill="#00ff00" font-size="7.2" textLength="21" lengthAdjust="spacingAndGlyphs" font-weight="bold">Q235-A</text>
<text x="739.5" y="557.8" fill="#00ff00" font-size="6.4" font-weight="bold" textLength="14" lengthAdjust="spacingAndGlyphs">镀锌</text>
<text x="581.3" y="564.8" fill="#00ff00" font-size="7.4" textLength="8" lengthAdjust="spacingAndGlyphs" font-weight="bold">17</text>
<text x="591.5" y="564.8" fill="#00ff00" font-size="7.4" textLength="35" lengthAdjust="spacingAndGlyphs" font-weight="bold">ISW50-100A</text>
<text x="632.5" y="564.8" fill="#00ff00" font-size="6.8" font-weight="bold" textLength="14" lengthAdjust="spacingAndGlyphs">水泵</text>
<text x="671" y="564.8" fill="#00ff00" font-size="7.4" textLength="4" lengthAdjust="spacingAndGlyphs" font-weight="bold">1</text>
<text x="679.5" y="564.8" fill="#00ff00" font-size="7.2" textLength="20" lengthAdjust="spacingAndGlyphs" font-weight="bold">组合件</text>
<text x="739.5" y="564.8" fill="#00ff00" font-size="6.4" font-weight="bold" textLength="14" lengthAdjust="spacingAndGlyphs">1.5kW</text>
<text x="581.3" y="570.8" fill="#00ff00" font-size="7.4" textLength="8" lengthAdjust="spacingAndGlyphs" font-weight="bold">16</text>
<text x="632.5" y="570.8" fill="#00ff00" font-size="6.8" font-weight="bold" textLength="35" lengthAdjust="spacingAndGlyphs">钢丝软管Ø25</text>
<text x="671" y="570.8" fill="#00ff00" font-size="7.4" textLength="4" lengthAdjust="spacingAndGlyphs" font-weight="bold">1</text>
<text x="679.5" y="570.8" fill="#00ff00" font-size="7.2" textLength="14" lengthAdjust="spacingAndGlyphs" font-weight="bold">橡胶</text>
<text x="739.5" y="570.8" fill="#00ff00" font-size="6.4" font-weight="bold" textLength="14" lengthAdjust="spacingAndGlyphs">L=4M</text>
<text x="581.3" y="577.8" fill="#00ff00" font-size="7.4" textLength="8" lengthAdjust="spacingAndGlyphs" font-weight="bold">15</text>
<text x="591.5" y="577.8" fill="#00ff00" font-size="7.4" textLength="35" lengthAdjust="spacingAndGlyphs" font-weight="bold">CLS793-09</text>
<text x="632.5" y="577.8" fill="#00ff00" font-size="6.8" font-weight="bold" textLength="35" lengthAdjust="spacingAndGlyphs">出风管接头Ø470</text>
<text x="671" y="577.8" fill="#00ff00" font-size="7.4" textLength="4" lengthAdjust="spacingAndGlyphs" font-weight="bold">1</text>
<text x="679.5" y="577.8" fill="#00ff00" font-size="7.2" textLength="21" lengthAdjust="spacingAndGlyphs" font-weight="bold">Q235-A</text>
<text x="581.3" y="584.8" fill="#00ff00" font-size="7.4" textLength="8" lengthAdjust="spacingAndGlyphs" font-weight="bold">14</text>
<text x="632.5" y="584.8" fill="#00ff00" font-size="6.8" font-weight="bold" textLength="32" lengthAdjust="spacingAndGlyphs">螺栓M8×12</text>
<text x="671" y="584.8" fill="#00ff00" font-size="7.4" textLength="4" lengthAdjust="spacingAndGlyphs" font-weight="bold">1</text>
<text x="679.5" y="584.8" fill="#00ff00" font-size="7.2" textLength="21" lengthAdjust="spacingAndGlyphs" font-weight="bold">Q235-A</text>
<text x="739.5" y="584.8" fill="#00ff00" font-size="6.4" font-weight="bold" textLength="14" lengthAdjust="spacingAndGlyphs">GB5783</text>
<text x="581.3" y="591.8" fill="#00ff00" font-size="7.4" textLength="8" lengthAdjust="spacingAndGlyphs" font-weight="bold">13</text>
<text x="632.5" y="591.8" fill="#00ff00" font-size="6.8" font-weight="bold" textLength="35" lengthAdjust="spacingAndGlyphs">石棉橡胶板3.5</text>
<text x="671" y="591.8" fill="#00ff00" font-size="7.4" textLength="4" lengthAdjust="spacingAndGlyphs" font-weight="bold">1</text>
<text x="679.5" y="591.8" fill="#00ff00" font-size="7.2" textLength="14" lengthAdjust="spacingAndGlyphs" font-weight="bold">石棉</text>
<text x="739.5" y="591.8" fill="#00ff00" font-size="6.4" font-weight="bold" textLength="14" lengthAdjust="spacingAndGlyphs">XB</text>
<text x="581.3" y="597.8" fill="#00ff00" font-size="7.4" textLength="8" lengthAdjust="spacingAndGlyphs" font-weight="bold">12</text>
<text x="632.5" y="597.8" fill="#00ff00" font-size="6.8" font-weight="bold" textLength="24" lengthAdjust="spacingAndGlyphs">螺母M12</text>
<text x="671" y="597.8" fill="#00ff00" font-size="7.4" textLength="4" lengthAdjust="spacingAndGlyphs" font-weight="bold">1</text>
<text x="679.5" y="597.8" fill="#00ff00" font-size="7.2" textLength="21" lengthAdjust="spacingAndGlyphs" font-weight="bold">Q235-A</text>
<text x="739.5" y="597.8" fill="#00ff00" font-size="6.4" font-weight="bold" textLength="14" lengthAdjust="spacingAndGlyphs">GB6170</text>
<text x="581.3" y="604.8" fill="#00ff00" font-size="7.4" textLength="8" lengthAdjust="spacingAndGlyphs" font-weight="bold">11</text>
<text x="591.5" y="604.8" fill="#00ff00" font-size="7.4" textLength="35" lengthAdjust="spacingAndGlyphs" font-weight="bold">CLS793-08</text>
<text x="632.5" y="604.8" fill="#00ff00" font-size="6.8" font-weight="bold" textLength="35" lengthAdjust="spacingAndGlyphs">挡水板Ø790×3.5</text>
<text x="671" y="604.8" fill="#00ff00" font-size="7.4" textLength="4" lengthAdjust="spacingAndGlyphs" font-weight="bold">6</text>
<text x="679.5" y="604.8" fill="#00ff00" font-size="7.2" textLength="7" lengthAdjust="spacingAndGlyphs" font-weight="bold">A3</text>
<text x="581.3" y="611.8" fill="#00ff00" font-size="7.4" textLength="8" lengthAdjust="spacingAndGlyphs" font-weight="bold">10</text>
<text x="591.5" y="611.8" fill="#00ff00" font-size="7.4" textLength="35" lengthAdjust="spacingAndGlyphs" font-weight="bold">CLS793-07</text>
<text x="632.5" y="611.8" fill="#00ff00" font-size="6.8" font-weight="bold" textLength="14" lengthAdjust="spacingAndGlyphs">筒体</text>
<text x="671" y="611.8" fill="#00ff00" font-size="7.4" textLength="4" lengthAdjust="spacingAndGlyphs" font-weight="bold">6</text>
<text x="679.5" y="611.8" fill="#00ff00" font-size="7.2" textLength="21" lengthAdjust="spacingAndGlyphs" font-weight="bold">Q235-A</text>
<text x="581.3" y="618.8" fill="#00ff00" font-size="7.4" textLength="4" lengthAdjust="spacingAndGlyphs" font-weight="bold">9</text>
<text x="632.5" y="618.8" fill="#00ff00" font-size="6.8" font-weight="bold" textLength="32" lengthAdjust="spacingAndGlyphs">球阀G1/2"</text>
<text x="671" y="618.8" fill="#00ff00" font-size="7.4" textLength="4" lengthAdjust="spacingAndGlyphs" font-weight="bold">6</text>
<text x="679.5" y="618.8" fill="#00ff00" font-size="7.2" textLength="21" lengthAdjust="spacingAndGlyphs" font-weight="bold">Q235-A</text>
<text x="581.3" y="624.8" fill="#00ff00" font-size="7.4" textLength="4" lengthAdjust="spacingAndGlyphs" font-weight="bold">8</text>
<text x="591.5" y="624.8" fill="#00ff00" font-size="7.4" textLength="35" lengthAdjust="spacingAndGlyphs" font-weight="bold">CLS793-06</text>
<text x="632.5" y="624.8" fill="#00ff00" font-size="6.8" font-weight="bold" textLength="34" lengthAdjust="spacingAndGlyphs">进风口法兰</text>
<text x="671" y="624.8" fill="#00ff00" font-size="7.4" textLength="4" lengthAdjust="spacingAndGlyphs" font-weight="bold">1</text>
<text x="679.5" y="624.8" fill="#00ff00" font-size="7.2" textLength="7" lengthAdjust="spacingAndGlyphs" font-weight="bold">A3</text>
<text x="581.3" y="631.8" fill="#00ff00" font-size="7.4" textLength="4" lengthAdjust="spacingAndGlyphs" font-weight="bold">7</text>
<text x="591.5" y="631.8" fill="#00ff00" font-size="7.4" textLength="35" lengthAdjust="spacingAndGlyphs" font-weight="bold">CLS793-05</text>
<text x="632.5" y="631.8" fill="#00ff00" font-size="6.8" font-weight="bold" textLength="14" lengthAdjust="spacingAndGlyphs">支架</text>
<text x="671" y="631.8" fill="#00ff00" font-size="7.4" textLength="4" lengthAdjust="spacingAndGlyphs" font-weight="bold">2</text>
<text x="679.5" y="631.8" fill="#00ff00" font-size="7.2" textLength="21" lengthAdjust="spacingAndGlyphs" font-weight="bold">Q235-A</text>
<text x="581.3" y="638.8" fill="#00ff00" font-size="7.4" textLength="4" lengthAdjust="spacingAndGlyphs" font-weight="bold">6</text>
<text x="591.5" y="638.8" fill="#00ff00" font-size="7.4" textLength="35" lengthAdjust="spacingAndGlyphs" font-weight="bold">CLS793-04</text>
<text x="632.5" y="638.8" fill="#00ff00" font-size="6.8" font-weight="bold" textLength="35" lengthAdjust="spacingAndGlyphs">锥体Ø790×60°</text>
<text x="671" y="638.8" fill="#00ff00" font-size="7.4" textLength="4" lengthAdjust="spacingAndGlyphs" font-weight="bold">1</text>
<text x="679.5" y="638.8" fill="#00ff00" font-size="7.2" textLength="21" lengthAdjust="spacingAndGlyphs" font-weight="bold">Q235-A</text>
<text x="581.3" y="645.8" fill="#00ff00" font-size="7.4" textLength="4" lengthAdjust="spacingAndGlyphs" font-weight="bold">5</text>
<text x="632.5" y="645.8" fill="#00ff00" font-size="6.8" font-weight="bold" textLength="31" lengthAdjust="spacingAndGlyphs">排污管G2"</text>
<text x="671" y="645.8" fill="#00ff00" font-size="7.4" textLength="4" lengthAdjust="spacingAndGlyphs" font-weight="bold">2</text>
<text x="679.5" y="645.8" fill="#00ff00" font-size="7.2" textLength="21" lengthAdjust="spacingAndGlyphs" font-weight="bold">Q235-A</text>
<text x="739.5" y="645.8" fill="#00ff00" font-size="6.4" font-weight="bold" textLength="14" lengthAdjust="spacingAndGlyphs">镀锌管</text>
<text x="581.3" y="651.8" fill="#00ff00" font-size="7.4" textLength="4" lengthAdjust="spacingAndGlyphs" font-weight="bold">4</text>
<text x="591.5" y="651.8" fill="#00ff00" font-size="7.4" textLength="35" lengthAdjust="spacingAndGlyphs" font-weight="bold">CLS793-03</text>
<text x="632.5" y="651.8" fill="#00ff00" font-size="6.8" font-weight="bold" textLength="14" lengthAdjust="spacingAndGlyphs">水箱</text>
<text x="671" y="651.8" fill="#00ff00" font-size="7.4" textLength="4" lengthAdjust="spacingAndGlyphs" font-weight="bold">1</text>
<text x="679.5" y="651.8" fill="#00ff00" font-size="7.2" textLength="21" lengthAdjust="spacingAndGlyphs" font-weight="bold">Q235-A</text>
<text x="581.3" y="658.8" fill="#00ff00" font-size="7.4" textLength="4" lengthAdjust="spacingAndGlyphs" font-weight="bold">3</text>
<text x="591.5" y="658.8" fill="#00ff00" font-size="7.4" textLength="35" lengthAdjust="spacingAndGlyphs" font-weight="bold">CLS793-02</text>
<text x="632.5" y="658.8" fill="#00ff00" font-size="6.8" font-weight="bold" textLength="31" lengthAdjust="spacingAndGlyphs">溢流管Ø57</text>
<text x="671" y="658.8" fill="#00ff00" font-size="7.4" textLength="4" lengthAdjust="spacingAndGlyphs" font-weight="bold">3</text>
<text x="679.5" y="658.8" fill="#00ff00" font-size="7.2" textLength="21" lengthAdjust="spacingAndGlyphs" font-weight="bold">Q235-A</text>
<text x="581.3" y="665.8" fill="#00ff00" font-size="7.4" textLength="4" lengthAdjust="spacingAndGlyphs" font-weight="bold">2</text>
<text x="632.5" y="665.8" fill="#00ff00" font-size="6.8" font-weight="bold" textLength="31" lengthAdjust="spacingAndGlyphs">进水管G1"</text>
<text x="671" y="665.8" fill="#00ff00" font-size="7.4" textLength="4" lengthAdjust="spacingAndGlyphs" font-weight="bold">3</text>
<text x="679.5" y="665.8" fill="#00ff00" font-size="7.2" textLength="21" lengthAdjust="spacingAndGlyphs" font-weight="bold">Q235-A</text>
<text x="581.3" y="671.8" fill="#00ff00" font-size="7.4" textLength="4" lengthAdjust="spacingAndGlyphs" font-weight="bold">1</text>
<text x="591.5" y="671.8" fill="#00ff00" font-size="7.4" textLength="35" lengthAdjust="spacingAndGlyphs" font-weight="bold">CLS793-01</text>
<text x="632.5" y="671.8" fill="#00ff00" font-size="6.8" font-weight="bold" textLength="32" lengthAdjust="spacingAndGlyphs">喷嘴Ø8×12</text>
<text x="671" y="671.8" fill="#00ff00" font-size="7.4" textLength="4" lengthAdjust="spacingAndGlyphs" font-weight="bold">3</text>
<text x="679.5" y="671.8" fill="#00ff00" font-size="7.2" textLength="21" lengthAdjust="spacingAndGlyphs" font-weight="bold">Q235-A</text>
<text x="581.5" y="682" fill="#00ff00" font-size="4.6" font-weight="bold">序号</text>
<text x="594" y="682" fill="#00ff00" font-size="4.6" font-weight="bold">代</text>
<text x="624" y="682" fill="#00ff00" font-size="4.6" font-weight="bold">号</text>
<text x="636" y="682" fill="#00ff00" font-size="4.6" font-weight="bold">名</text>
<text x="660" y="682" fill="#00ff00" font-size="4.6" font-weight="bold">称</text>
<text x="669.5" y="682" fill="#00ff00" font-size="4.6" font-weight="bold">数量</text>
<text x="682" y="682" fill="#00ff00" font-size="4.6" font-weight="bold">材</text>
<text x="698" y="682" fill="#00ff00" font-size="4.6" font-weight="bold">料</text>
<text x="741" y="682" fill="#00ff00" font-size="4.6" font-weight="bold">备</text>
<text x="749" y="682" fill="#00ff00" font-size="4.6" font-weight="bold">注</text>
<line x1="705.5" y1="678.5" x2="738.5" y2="678.5" stroke="#ffffff" stroke-width="1" />
<text x="707" y="677" fill="#00ff00" font-size="4" font-weight="bold">单</text>
<text x="715" y="677" fill="#00ff00" font-size="4" font-weight="bold">件</text>
<text x="724" y="677" fill="#00ff00" font-size="4" font-weight="bold">总</text>
<text x="732" y="677" fill="#00ff00" font-size="4" font-weight="bold">计</text>
<text x="712" y="684" fill="#00ff00" font-size="4" font-weight="bold">重</text>
<text x="729" y="684" fill="#00ff00" font-size="4" font-weight="bold">量</text>
<rect x="580.5" y="685.5" width="174.0" height="44.0" stroke="#ffffff" stroke-width="1" fill="none"/>
<line x1="580.5" y1="691.5" x2="638.5" y2="691.5" stroke="#ffffff" stroke-width="1" />
<line x1="580.5" y1="696.5" x2="638.5" y2="696.5" stroke="#ffffff" stroke-width="1" />
<line x1="580.5" y1="702.5" x2="638.5" y2="702.5" stroke="#ffffff" stroke-width="1" />
<line x1="580.5" y1="708.5" x2="638.5" y2="708.5" stroke="#ffffff" stroke-width="1" />
<line x1="580.5" y1="713.5" x2="638.5" y2="713.5" stroke="#ffffff" stroke-width="1" />
<line x1="580.5" y1="718.5" x2="638.5" y2="718.5" stroke="#ffffff" stroke-width="1" />
<line x1="580.5" y1="724.5" x2="638.5" y2="724.5" stroke="#ffffff" stroke-width="1" />
<line x1="587.5" y1="685.5" x2="587.5" y2="729.5" stroke="#ffffff" stroke-width="1" />
<line x1="596.5" y1="685.5" x2="596.5" y2="729.5" stroke="#ffffff" stroke-width="1" />
<line x1="607.5" y1="685.5" x2="607.5" y2="729.5" stroke="#ffffff" stroke-width="1" />
<line x1="618.5" y1="685.5" x2="618.5" y2="729.5" stroke="#ffffff" stroke-width="1" />
<line x1="629.5" y1="685.5" x2="629.5" y2="729.5" stroke="#ffffff" stroke-width="1" />
<line x1="638.5" y1="685.5" x2="638.5" y2="729.5" stroke="#ffffff" stroke-width="1" />
<line x1="696.5" y1="685.5" x2="696.5" y2="729.5" stroke="#ffffff" stroke-width="1" />
<line x1="638.5" y1="708.5" x2="696.5" y2="708.5" stroke="#ffffff" stroke-width="1" />
<line x1="696.5" y1="700.5" x2="754.5" y2="700.5" stroke="#ffffff" stroke-width="1" />
<line x1="696.5" y1="714.5" x2="754.5" y2="714.5" stroke="#ffffff" stroke-width="1" />
<line x1="638.5" y1="713.5" x2="696.5" y2="713.5" stroke="#ffffff" stroke-width="1" />
<line x1="638.5" y1="718.5" x2="696.5" y2="718.5" stroke="#ffffff" stroke-width="1" />
<line x1="638.5" y1="724.5" x2="696.5" y2="724.5" stroke="#ffffff" stroke-width="1" />
<line x1="647.5" y1="708.5" x2="647.5" y2="729.5" stroke="#ffffff" stroke-width="1" />
<line x1="657.5" y1="708.5" x2="657.5" y2="729.5" stroke="#ffffff" stroke-width="1" />
<line x1="667.5" y1="708.5" x2="667.5" y2="729.5" stroke="#ffffff" stroke-width="1" />
<line x1="677.5" y1="708.5" x2="677.5" y2="729.5" stroke="#ffffff" stroke-width="1" />
<line x1="686.5" y1="708.5" x2="686.5" y2="729.5" stroke="#ffffff" stroke-width="1" />
<text x="643" y="701" fill="#00ff00" font-size="6.5" font-weight="bold" textLength="25" lengthAdjust="spacingAndGlyphs">水膜除尘器</text>
<text x="668" y="702" fill="#00ff00" font-size="10" font-weight="normal" textLength="27" lengthAdjust="spacingAndGlyphs">CLS793</text>
<text x="705" y="697.5" fill="#00ff00" font-size="11" font-weight="normal" textLength="42" lengthAdjust="spacingAndGlyphs">CLS793-00</text>
<text x="698" y="711" fill="#00ff00" font-size="4.5" font-weight="bold">名称</text>
<text x="719" y="711" fill="#00ff00" font-size="5.5" font-weight="bold">组合件</text>
<text x="687" y="722" fill="#00ff00" font-size="4.5"  font-weight="bold">1:15</text>
<text x="666" y="722" fill="#00ff00" font-size="5"  font-weight="bold">1</text>
<text x="582" y="709" fill="#ffffff" font-size="3.8" font-weight="bold">标记</text>
<text x="592" y="709" fill="#ffffff" font-size="3.8" font-weight="bold">处数</text>
<text x="610" y="709" fill="#ffffff" font-size="3.8" font-weight="bold">更改文件号</text>
<text x="582" y="715" fill="#ffffff" font-size="3.8" font-weight="bold">设计</text>
<text x="582" y="720" fill="#ffffff" font-size="3.8" font-weight="bold">审核</text>
<text x="582" y="726" fill="#ffffff" font-size="3.8" font-weight="bold">工艺</text>
<text x="612" y="715" fill="#ffffff" font-size="3.8" font-weight="bold">标准化</text>
<text x="612" y="726" fill="#ffffff" font-size="3.8" font-weight="bold">批准</text>
<text x="640" y="713" fill="#ffffff" font-size="3.8" font-weight="bold">阶段标记</text>
<text x="668" y="713" fill="#ffffff" font-size="3.8" font-weight="bold">重量</text>
<text x="680" y="713" fill="#ffffff" font-size="3.8" font-weight="bold">比例</text>
<text x="642" y="728" fill="#ffffff" font-size="3.8" font-weight="bold">共 张</text>
<text x="668" y="728" fill="#ffffff" font-size="3.8" font-weight="bold">第 张</text>
<rect x="39.5" y="728.5" width="11.0" height="11.0" stroke="#ffffff" stroke-width="1" fill="none"/>
<line x1="45.5" y1="728" x2="45.5" y2="678" stroke="#ffffff" stroke-width="1" />
<polyline points="45.5,662.5 41.5,678.5 49.5,678.5 45.5,662.5" stroke="#ffffff" stroke-width="1" fill="none" />
<line x1="45.5" y1="666" x2="45.5" y2="678" stroke="#ffffff" stroke-width="1" />
<line x1="50" y1="734.5" x2="102" y2="734.5" stroke="#ffffff" stroke-width="1" />
<polyline points="116.5,734.5 102.5,730.5 102.5,738.5 116.5,734.5" stroke="#ffffff" stroke-width="1" fill="none" />
<line x1="102" y1="734.5" x2="113" y2="734.5" stroke="#ffffff" stroke-width="1" />
<polyline points="42,639 46.5,646 51,639" stroke="#ffffff" stroke-width="1" fill="none" />
<line x1="46.5" y1="646" x2="46.5" y2="653" stroke="#ffffff" stroke-width="1" />
<line x1="128" y1="727" x2="138" y2="741" stroke="#ffffff" stroke-width="1" />
<line x1="138" y1="727" x2="128" y2="741" stroke="#ffffff" stroke-width="1" />
<line x1="915" y1="554.5" x2="971" y2="554.5" stroke="#ffffff" stroke-width="1" />
<line x1="943.5" y1="527" x2="943.5" y2="583" stroke="#ffffff" stroke-width="1" />
<rect x="935.5" y="546.5" width="16.0" height="16.0" stroke="#ffffff" stroke-width="1" fill="none"/>
</svg>
<svg class="abs" id="wm" style="left:420px;top:392px" width="310" height="76" viewBox="420 392 310 76">
<defs><linearGradient id="tg" x1="0" y1="0" x2="0" y2="1"><stop offset="0" stop-color="#4f95aa"/><stop offset="0.5" stop-color="#5aa0b4"/><stop offset="0.55" stop-color="#86c2d2"/><stop offset="1" stop-color="#a6d6e2"/></linearGradient></defs>
<path d="M481.9 408.0 L482.9 401.8 L487.9 401.8 L488.9 408.0 L493.5 409.2 L497.4 404.3 L501.8 406.9 L499.6 412.7 L502.9 416.0 L508.7 413.8 L511.3 418.2 L506.4 422.1 L507.6 426.7 L513.8 427.7 L513.8 432.7 L507.6 433.7 L506.4 438.3 L511.3 442.2 L508.7 446.6 L502.9 444.4 L499.6 447.7 L501.8 453.5 L497.4 456.1 L493.5 451.2 L488.9 452.4 L487.9 458.6 L482.9 458.6 L481.9 452.4 L477.3 451.2 L473.4 456.1 L469.0 453.5 L471.2 447.7 L467.9 444.4 L462.1 446.6 L459.5 442.2 L464.4 438.3 L463.2 433.7 L457.0 432.7 L457.0 427.7 L463.2 426.7 L464.4 422.1 L459.5 418.2 L462.1 413.8 L467.9 416.0 L471.2 412.7 L469.0 406.9 L473.4 404.3 L477.3 409.2Z" fill="#181818" stroke="#f6f6f6" stroke-width="8" stroke-linejoin="round"/>
<path d="M481.9 408.0 L482.9 401.8 L487.9 401.8 L488.9 408.0 L493.5 409.2 L497.4 404.3 L501.8 406.9 L499.6 412.7 L502.9 416.0 L508.7 413.8 L511.3 418.2 L506.4 422.1 L507.6 426.7 L513.8 427.7 L513.8 432.7 L507.6 433.7 L506.4 438.3 L511.3 442.2 L508.7 446.6 L502.9 444.4 L499.6 447.7 L501.8 453.5 L497.4 456.1 L493.5 451.2 L488.9 452.4 L487.9 458.6 L482.9 458.6 L481.9 452.4 L477.3 451.2 L473.4 456.1 L469.0 453.5 L471.2 447.7 L467.9 444.4 L462.1 446.6 L459.5 442.2 L464.4 438.3 L463.2 433.7 L457.0 432.7 L457.0 427.7 L463.2 426.7 L464.4 422.1 L459.5 418.2 L462.1 413.8 L467.9 416.0 L471.2 412.7 L469.0 406.9 L473.4 404.3 L477.3 409.2Z" fill="none" stroke="#1c1c1c" stroke-width="5" stroke-linejoin="round"/>
<path d="M481.9 408.0 L482.9 401.8 L487.9 401.8 L488.9 408.0 L493.5 409.2 L497.4 404.3 L501.8 406.9 L499.6 412.7 L502.9 416.0 L508.7 413.8 L511.3 418.2 L506.4 422.1 L507.6 426.7 L513.8 427.7 L513.8 432.7 L507.6 433.7 L506.4 438.3 L511.3 442.2 L508.7 446.6 L502.9 444.4 L499.6 447.7 L501.8 453.5 L497.4 456.1 L493.5 451.2 L488.9 452.4 L487.9 458.6 L482.9 458.6 L481.9 452.4 L477.3 451.2 L473.4 456.1 L469.0 453.5 L471.2 447.7 L467.9 444.4 L462.1 446.6 L459.5 442.2 L464.4 438.3 L463.2 433.7 L457.0 432.7 L457.0 427.7 L463.2 426.7 L464.4 422.1 L459.5 418.2 L462.1 413.8 L467.9 416.0 L471.2 412.7 L469.0 406.9 L473.4 404.3 L477.3 409.2Z" fill="none" stroke="#f6f6f6" stroke-width="2" stroke-linejoin="round"/>
<circle cx="485.4" cy="430.2" r="16.5" fill="none" stroke="#f4f4f4" stroke-width="2.2"/>
<circle cx="485.4" cy="430.2" r="13" fill="#fff"/>
<path d="M477.0 426.0 C468.0 420.0 460.0 417.0 455.0 420.5 C446.0 425.0 437.0 430.0 430.5 434.0 C436.0 436.5 441.0 436.5 444.0 436.0 C443.0 438.0 446.0 440.0 450.0 439.5 C451.0 441.5 456.0 442.5 460.0 441.0 C463.0 442.0 469.0 440.0 472.0 437.5 C475.0 437.0 477.0 435.0 478.0 433.0Z" fill="#5b9fb3" stroke="#f4f4f4" stroke-width="5" stroke-linejoin="round"/>
<path d="M493.8 426.0 C502.8 420.0 510.8 417.0 515.8 420.5 C524.8 425.0 533.8 430.0 540.3 434.0 C534.8 436.5 529.8 436.5 526.8 436.0 C527.8 438.0 524.8 440.0 520.8 439.5 C519.8 441.5 514.8 442.5 510.8 441.0 C507.8 442.0 501.8 440.0 498.8 437.5 C495.8 437.0 493.8 435.0 492.8 433.0Z" fill="#5b9fb3" stroke="#f4f4f4" stroke-width="5" stroke-linejoin="round"/>
<path d="M477.0 426.0 C468.0 420.0 460.0 417.0 455.0 420.5 C446.0 425.0 437.0 430.0 430.5 434.0 C436.0 436.5 441.0 436.5 444.0 436.0 C443.0 438.0 446.0 440.0 450.0 439.5 C451.0 441.5 456.0 442.5 460.0 441.0 C463.0 442.0 469.0 440.0 472.0 437.5 C475.0 437.0 477.0 435.0 478.0 433.0Z" fill="#5b9fb3" stroke="#23353c" stroke-width="1.4" stroke-linejoin="round"/>
<path d="M444.0 436.0 L462.0 427.0 M450.0 439.5 L466.0 430.0 M460.0 441.0 L470.0 433.0 M438.0 433.0 L458.0 423.5 " fill="none" stroke="#2c5260" stroke-width="1.2"/>
<path d="M493.8 426.0 C502.8 420.0 510.8 417.0 515.8 420.5 C524.8 425.0 533.8 430.0 540.3 434.0 C534.8 436.5 529.8 436.5 526.8 436.0 C527.8 438.0 524.8 440.0 520.8 439.5 C519.8 441.5 514.8 442.5 510.8 441.0 C507.8 442.0 501.8 440.0 498.8 437.5 C495.8 437.0 493.8 435.0 492.8 433.0Z" fill="#5b9fb3" stroke="#23353c" stroke-width="1.4" stroke-linejoin="round"/>
<path d="M526.8 436.0 L508.8 427.0 M520.8 439.5 L504.8 430.0 M510.8 441.0 L500.8 433.0 M532.8 433.0 L512.8 423.5 " fill="none" stroke="#2c5260" stroke-width="1.2"/>
<path d="M472.4 423.2 Q485.4 419.2 498.4 423.2 L498.4 437.2 Q485.4 441.2 472.4 437.2Z" fill="#fff" stroke="none"/>
<text x="485.4" y="437.7" text-anchor="middle" font-family="'Liberation Serif',serif" font-weight="bold" font-size="22" fill="#4f93a8" stroke="#1f3a44" stroke-width="1.3" paint-order="stroke" textLength="24" lengthAdjust="spacingAndGlyphs">JX</text>
<text x="548" y="436" font-family="'Liberation Sans','Noto Sans CJK SC',sans-serif" font-weight="900" font-size="37" textLength="172" lengthAdjust="spacingAndGlyphs" fill="#2b3438" stroke="#2b3438" stroke-width="7.8" stroke-linejoin="round">机械帝国</text>
<text x="548" y="436" font-family="'Liberation Sans','Noto Sans CJK SC',sans-serif" font-weight="900" font-size="37" textLength="172" lengthAdjust="spacingAndGlyphs" fill="#f6f6f6" stroke="#f6f6f6" stroke-width="4.6" stroke-linejoin="round">机械帝国</text>
<text x="548" y="436" font-family="'Liberation Sans','Noto Sans CJK SC',sans-serif" font-weight="900" font-size="37" textLength="172" lengthAdjust="spacingAndGlyphs" fill="url(#tg)" stroke="url(#tg)" stroke-width="1.2" stroke-linejoin="round">机械帝国</text>
<text x="543.5" y="457.5" font-family="'Liberation Sans',sans-serif" font-weight="bold" font-size="17.5" textLength="174" lengthAdjust="spacingAndGlyphs" fill="#2b2b2b" stroke="#2b2b2b" stroke-width="5.5" stroke-linejoin="round">JXDIGUO.COM</text>
<text x="543.5" y="457.5" font-family="'Liberation Sans',sans-serif" font-weight="bold" font-size="17.5" textLength="174" lengthAdjust="spacingAndGlyphs" fill="#f2f2f2" stroke="#f2f2f2" stroke-width="1">JXDIGUO.COM</text>
</svg>
<div id="vscroll" class="abs"></div>
<div id="tabs" class="abs"></div>
<svg class="abs" id="sides" style="left:0;top:160px" width="1152" height="610" viewBox="0 160 1152 610"><defs>
<linearGradient id="sbg" x1="0" y1="0" x2="1" y2="0"><stop offset="0" stop-color="#d6e2fd"/><stop offset="1" stop-color="#b4c8f6"/></linearGradient>
<linearGradient id="lg" x1="0" y1="0" x2="1" y2="1"><stop offset="0" stop-color="#222"/><stop offset="1" stop-color="#9ab"/></linearGradient>
<pattern id="lh" width="3" height="3" patternUnits="userSpaceOnUse"><rect width="3" height="3" fill="#eef4fc"/><path d="M0 3l3-3" stroke="#2a5a9a" stroke-width="1"/></pattern>
</defs>
<line x1="25.5" y1="160" x2="25.5" y2="592" stroke="#c5c2b2"/><line x1="0" y1="591.5" x2="26" y2="591.5" stroke="#c5c2b2"/>
<line x1="2" y1="161.5" x2="23" y2="161.5" stroke="#fff"/><line x1="2" y1="162.5" x2="23" y2="162.5" stroke="#b4b1a2"/>
<line x1="2" y1="165.5" x2="23" y2="165.5" stroke="#fff"/><line x1="2" y1="166.5" x2="23" y2="166.5" stroke="#b4b1a2"/>
<g transform="translate(4,172)"><line x1="2" y1="14" x2="14" y2="2" stroke="#000" stroke-width="1.4" /><rect x="0.5" y="12.5" width="3" height="3" fill="#3a7ab8" stroke="#1a4a80" stroke-width="0.6" /><rect x="12.5" y="0.5" width="3" height="3" fill="#3a7ab8" stroke="#1a4a80" stroke-width="0.6" /></g>
<g transform="translate(4,194)"><line x1="1" y1="15" x2="15" y2="1" stroke="#000" stroke-width="1.4" /><rect x="3.5" y="9.5" width="3" height="3" fill="#3a7ab8" stroke="#1a4a80" stroke-width="0.6" /><rect x="9.5" y="3.5" width="3" height="3" fill="#3a7ab8" stroke="#1a4a80" stroke-width="0.6" /><path d="M15 1l-4 1 3 3zM1 15l4-1-3-3z" fill="#000" stroke="#000" stroke-width="0.4" /></g>
<g transform="translate(4,216)"><path d="M2 12h6c6 0 6-8 1-8" fill="none" stroke="#333" stroke-width="1.4" /><rect x="0.5" y="10.5" width="3" height="3" fill="#3a7ab8" stroke="#1a4a80" stroke-width="0.6" /><rect x="6.5" y="10.5" width="3" height="3" fill="#3a7ab8" stroke="#1a4a80" stroke-width="0.6" /><rect x="7.5" y="2.5" width="3" height="3" fill="#3a7ab8" stroke="#1a4a80" stroke-width="0.6" /></g>
<g transform="translate(4,238)"><path d="M8 1.5l6.5 5-2.5 7.5h-8l-2.5-7.5z" fill="#e4ecf6" stroke="#222" stroke-width="1.4" /></g>
<g transform="translate(4,260)"><rect x="2.5" y="4.5" width="12" height="8" fill="#e4ecf6" stroke="#222" stroke-width="1.4" /><rect x="1.0" y="11.0" width="3" height="3" fill="#3a7ab8" stroke="#1a4a80" stroke-width="0.6" /><rect x="13.0" y="3.0" width="3" height="3" fill="#3a7ab8" stroke="#1a4a80" stroke-width="0.6" /></g>
<g transform="translate(4,282)"><path d="M2 14c0-7 4-11 12-12" fill="none" stroke="#333" stroke-width="1.4" /><rect x="0.5" y="12.5" width="3" height="3" fill="#3a7ab8" stroke="#1a4a80" stroke-width="0.6" /><rect x="12.5" y="0.5" width="3" height="3" fill="#3a7ab8" stroke="#1a4a80" stroke-width="0.6" /><rect x="3.5" y="4.5" width="3" height="3" fill="#3a7ab8" stroke="#1a4a80" stroke-width="0.6" /></g>
<g transform="translate(4,304)"><circle cx="8" cy="8" r="6.5" fill="#e4ecf6" stroke="#222" stroke-width="1.4"/><line x1="8" y1="8" x2="12.5" y2="3.5" stroke="#333" stroke-width="1.2" /><rect x="6.5" y="6.5" width="3" height="3" fill="#3a7ab8" stroke="#1a4a80" stroke-width="0.6" /></g>
<g transform="translate(4,326)"><path d="M5 3c2-3 7-1 6 2c3 0 4 4 1 5c1 3-3 5-5 3c-2 2-6 0-5-3c-3-1-2-5 1-5c0-1 1-2 2-2z" fill="#e4ecf6" stroke="#222" stroke-width="1.3" /></g>
<g transform="translate(4,348)"><path d="M1 13c3 1 4-3 6-6s4-5 8-5" fill="none" stroke="#222" stroke-width="1.3" /></g>
<g transform="translate(4,370)"><ellipse cx="8" cy="8" rx="6.5" ry="4.2" fill="#e4ecf6" stroke="#222" stroke-width="1.4"/><rect x="0.0" y="6.5" width="3" height="3" fill="#3a7ab8" stroke="#1a4a80" stroke-width="0.6" /><rect x="13.0" y="6.5" width="3" height="3" fill="#3a7ab8" stroke="#1a4a80" stroke-width="0.6" /><rect x="6.5" y="2.3" width="3" height="3" fill="#3a7ab8" stroke="#1a4a80" stroke-width="0.6" /></g>
<g transform="translate(4,392)"><path d="M13 11c3-4-1-8-6-7c-5 1-6 6-3 8" fill="none" stroke="#333" stroke-width="1.5" /><rect x="2.5" y="10.5" width="3" height="3" fill="#3a7ab8" stroke="#1a4a80" stroke-width="0.6" /><rect x="11.5" y="9.5" width="3" height="3" fill="#3a7ab8" stroke="#1a4a80" stroke-width="0.6" /></g>
<g transform="translate(4,414)"><rect x="6.5" y="1.5" width="8" height="8" fill="#fff" stroke="#8a98b0" stroke-width="1" /><rect x="1.5" y="5.5" width="8" height="6" fill="#e8e8a0" stroke="#556" stroke-width="1" /><circle cx="10" cy="12" r="3.2" fill="#c8e0a0" stroke="#456" stroke-width="1.1"/><path d="M16 13v4h-4z" fill="#000"/></g>
<g transform="translate(4,436)"><rect x="2.5" y="2.5" width="9" height="7" fill="#e8e8a0" stroke="#2a5a9a" stroke-width="1.2" /><circle cx="10" cy="11" r="3.6" fill="#eef6ff" stroke="#2a5a9a" stroke-width="1.2"/></g>
<g transform="translate(4,458)"><rect x="7" y="7" width="2.5" height="2.5" fill="#3a7ab8" stroke="#1a4a80" stroke-width="0.5" /></g>
<g transform="translate(4,479)"><rect x="2.5" y="2.5" width="11" height="11" fill="url(#lh)" stroke="#2a5a9a" stroke-width="1" /><path d="M0 5h16M0 11h16M5 0v16M11 0v16" fill="none" stroke="#2a5a9a" stroke-width="1" /></g>
<g transform="translate(4,502)"><rect x="2.5" y="2.5" width="11" height="11" fill="url(#lg)" stroke="#223" stroke-width="1" /><path d="M0 5h16M0 11h16M5 0v16M11 0v16" fill="none" stroke="#223" stroke-width="1" /></g>
<g transform="translate(4,525)"><path d="M1.5 2.5h9l4 4v7h-13z" fill="#cfe0f2" stroke="#2a5a9a" stroke-width="1.2" /><circle cx="8" cy="9" r="2.8" fill="#fff" stroke="#2a5a9a" stroke-width="1.1"/></g>
<g transform="translate(4,546)"><rect x="1.5" y="2.5" width="13" height="11" fill="#eef4fc" stroke="#2a5a9a" stroke-width="1.2" /><rect x="1.5" y="2.5" width="13" height="3" fill="#3a6ac8" stroke="#2a5a9a" stroke-width="0.6" /><path d="M1.5 8.5h13M1.5 11h13M6 5.5v8M10.5 5.5v8" fill="none" stroke="#2a5a9a" stroke-width="0.9" /></g>
<g transform="translate(4,568)"><text x="8" y="15" text-anchor="middle" font-size="18" fill="#111" font-family="'Liberation Sans',sans-serif">A</text></g>
<line x1="1126.5" y1="160" x2="1126.5" y2="547" stroke="#fff"/><line x1="1127" y1="546.5" x2="1152" y2="546.5" stroke="#c5c2b2"/>
<line x1="1129" y1="161.5" x2="1150" y2="161.5" stroke="#fff"/><line x1="1129" y1="162.5" x2="1150" y2="162.5" stroke="#b4b1a2"/>
<line x1="1129" y1="165.5" x2="1150" y2="165.5" stroke="#fff"/><line x1="1129" y1="166.5" x2="1150" y2="166.5" stroke="#b4b1a2"/>
<g transform="translate(1131,172)"><path d="M3 12l8-10 4 3-8 10z" fill="#f0c8c0" stroke="#7a3a30" stroke-width="0.9" /><path d="M9 4l4 3" fill="none" stroke="#e0a020" stroke-width="2.4" /><line x1="0" y1="15" x2="11" y2="15" stroke="#000" stroke-width="1" /><path d="M3 12l4 3" fill="none" stroke="#d04030" stroke-width="1.5" /></g>
<g transform="translate(1131,194)"><circle cx="5" cy="4" r="3.2" fill="none" stroke="#222" stroke-width="1.4"/><circle cx="10" cy="11" r="3.6" fill="#cfe0f2" stroke="#345" stroke-width="1.3"/><path d="M9 2c3 0 5 2 5 5M14 7l-2.5-1.5M14 7l1.5-2.5" fill="none" stroke="#1a2f6a" stroke-width="1.3" /></g>
<g transform="translate(1131,216)"><path d="M6 2v12h-5z" fill="#fff" stroke="#222" stroke-width="1.3" /><path d="M10 2v12h5z" fill="#cfe0f2" stroke="#2a5a9a" stroke-width="1.3" /><line x1="8" y1="0" x2="8" y2="16" stroke="#222" stroke-width="1" stroke-dasharray="2 1"/></g>
<g transform="translate(1131,238)"><path d="M1 14h14v-5h-3c2-4-1-7-4-7s-6 3-4 7h-3z" fill="none" stroke="#222" stroke-width="1.3" /><path d="M3.5 12h9v-1h-3c3-4 0-7-1.5-7s-4.5 3-1.5 7h-3z" fill="none" stroke="#2a6ab8" stroke-width="1.3" /></g>
<g transform="translate(1131,260)"><rect x="1.5" y="1.5" width="5" height="5" fill="#fff" stroke="#222" stroke-width="1.3" /><rect x="1.5" y="9.5" width="5" height="5" fill="#fff" stroke="#222" stroke-width="1.3" /><rect x="9.5" y="1.5" width="5" height="5" fill="#fff" stroke="#222" stroke-width="1.3" /><rect x="9.5" y="9.5" width="5" height="5" fill="#fff" stroke="#222" stroke-width="1.3" /></g>
<g transform="translate(1131,282)"><path d="M8 0l3 3.5h-2v3.5h3.5v-2l3.5 3-3.5 3v-2h-3.5v3.5h2l-3 3.5-3-3.5h2v-3.5h-3.5v2l-3.5-3 3.5-3v2h3.5v-3.5h-2z" fill="#3a6ab8" stroke="#1a3a80" stroke-width="0.6" /></g>
<g transform="translate(1131,304)"><path d="M12 4a6 6 0 1 1-7 0" fill="none" stroke="#1a4a90" stroke-width="2.2" /><path d="M2 1l5 1-3 4z" fill="#1a4a90" stroke="#1a4a90" stroke-width="0.5" /></g>
<g transform="translate(1131,326)"><rect x="1.5" y="1.5" width="13" height="13" fill="#dce8f4" stroke="#5a7aa0" stroke-width="1" /><rect x="1.5" y="8.5" width="6" height="6" fill="none" stroke="#222" stroke-width="1.2" stroke-dasharray="1.5 1"/></g>
<g transform="translate(1131,348)"><path d="M1.5 1.5h5v13h-5z" fill="#fff" stroke="#222" stroke-width="1.3" /><path d="M6.5 1.5l8 13h-8z" fill="#cfe0f2" stroke="#2a5a9a" stroke-width="1.3" /><line x1="6.5" y1="1" x2="6.5" y2="15" stroke="#222" stroke-width="1" stroke-dasharray="2 1"/></g>
<g transform="translate(1131,370)"><line x1="0" y1="9" x2="6" y2="9" stroke="#222" stroke-width="1.4" /><line x1="9" y1="9" x2="16" y2="9" stroke="#2a6ab8" stroke-width="1.2" stroke-dasharray="2 1.5"/><line x1="4" y1="15" x2="11" y2="2" stroke="#222" stroke-width="1.4" /></g>
<g transform="translate(1131,392)"><line x1="0" y1="9" x2="8" y2="9" stroke="#222" stroke-width="1.2" stroke-dasharray="2 1.5"/><line x1="8" y1="9" x2="11" y2="9" stroke="#2a6ab8" stroke-width="1.2" /><line x1="8" y1="15" x2="15" y2="2" stroke="#222" stroke-width="1.4" /></g>
<g transform="translate(1131,414)"><rect x="1.5" y="4.5" width="13" height="9" fill="#dce8f4" stroke="#222" stroke-width="1.3" /><rect x="7" y="3" width="2.5" height="2.5" fill="#ece9d8" stroke="#5a7aa0" stroke-width="0.8" /></g>
<g transform="translate(1131,436)"><rect x="1.5" y="4.5" width="13" height="9" fill="#dce8f4" stroke="#222" stroke-width="1.3" /><rect x="5" y="3" width="6" height="3" fill="#ece9d8" stroke="none" stroke-width="0" /><rect x="3.5" y="3" width="2.5" height="2.5" fill="#3a7ab8" stroke="none" stroke-width="0" /><rect x="10" y="3" width="2.5" height="2.5" fill="#3a7ab8" stroke="none" stroke-width="0" /></g>
<g transform="translate(1131,458)"><line x1="0" y1="8" x2="16" y2="8" stroke="#222" stroke-width="1.3" /><path d="M3 5l4 3-4 3zM13 5l-4 3 4 3z" fill="#1a4a90" stroke="#1a4a90" stroke-width="0.5" /></g>
<g transform="translate(1131,479)"><path d="M2 15v-8l6-5h7" fill="none" stroke="#222" stroke-width="1.4" /><path d="M2 2h6M2 2v5" fill="none" stroke="#2a6ab8" stroke-width="1" stroke-dasharray="1.5 1"/></g>
<g transform="translate(1131,502)"><path d="M2 15v-4c0-6 4-9 13-9" fill="none" stroke="#1a4a90" stroke-width="1.8" /><path d="M2 2h6M2 2v5" fill="none" stroke="#2a6ab8" stroke-width="1" stroke-dasharray="1.5 1"/></g>
<g transform="translate(1131,525)"><path d="M9 7l5-6" fill="none" stroke="#8a98a8" stroke-width="2.4" /><path d="M2 8l3-3 2 3 3-1-1 3 3 2-3 1 0 3-3-2-3 2 0-4-3-1 3-2z" fill="#e84020" stroke="#a01808" stroke-width="0.8" /><circle cx="6" cy="10" r="1.8" fill="#f8e040" stroke="#c08010" stroke-width="0.6"/></g>
<rect x="1108.5" y="160.5" width="15" height="15" rx="2" fill="url(#sbg)" stroke="#b7c9f0"/><path d="M1112 170l4-4 4 4" fill="none" stroke="#4d6185" stroke-width="2"/>
<rect x="1108.5" y="737.5" width="15" height="15" rx="2" fill="url(#sbg)" stroke="#b7c9f0"/><path d="M1112 743l4 4 4-4" fill="none" stroke="#4d6185" stroke-width="2"/>
<rect x="1108.5" y="449.5" width="15" height="14" rx="2" fill="url(#sbg)" stroke="#b7c9f0"/><line x1="1112" y1="453.5" x2="1120" y2="453.5" stroke="#8aa4e0"/><line x1="1112" y1="455.5" x2="1120" y2="455.5" stroke="#8aa4e0"/><line x1="1112" y1="457.5" x2="1120" y2="457.5" stroke="#8aa4e0"/><line x1="1112" y1="459.5" x2="1120" y2="459.5" stroke="#8aa4e0"/>
<rect x="28" y="753" width="60" height="16" fill="#ece9d8"/>
<rect x="27.5" y="753.5" width="14" height="14" fill="#ece9d8" stroke="#d8d5c6"/>
<path d="M37.5 756l-6 5 6 5z" fill="#aeab9c"/>
<rect x="29.5" y="756" width="1.8" height="10" fill="#aeab9c"/>
<rect x="41.5" y="753.5" width="14" height="14" fill="#ece9d8" stroke="#d8d5c6"/>
<path d="M51.5 756l-6 5 6 5z" fill="#aeab9c"/>
<rect x="55.5" y="753.5" width="14" height="14" fill="#ece9d8" stroke="#d8d5c6"/>
<path d="M59.5 756l6 5-6 5z" fill="#aeab9c"/>
<rect x="69.5" y="753.5" width="14" height="14" fill="#ece9d8" stroke="#d8d5c6"/>
<path d="M73.5 756l6 5-6 5z" fill="#aeab9c"/>
<rect x="79.7" y="756" width="1.8" height="10" fill="#aeab9c"/>
<path d="M86 753h44l-6 15h-32z" fill="#000"/>
<text x="95" y="765" font-size="12" fill="#fff" font-family="'Liberation Sans','Noto Sans CJK SC',sans-serif">模型</text>
<path d="M127 768l3-6M131 768h40l6-15" fill="none" stroke="#555" stroke-width="1"/>
<text x="135" y="765.5" font-size="12" fill="#000" font-family="'Liberation Sans','Noto Sans CJK SC',sans-serif">布局1</text>
<rect x="746" y="753" width="362" height="16" fill="#f6f5f0"/>
<rect x="741.5" y="754.5" width="3" height="13" fill="#fff" stroke="#c5c2b2"/>
<rect x="746.5" y="753.5" width="15" height="15" rx="2" fill="url(#sbg)" stroke="#b7c9f0"/><path d="M756 757l-4 4 4 4" fill="none" stroke="#4d6185" stroke-width="2"/>
<rect x="918.5" y="753.5" width="16" height="15" rx="2" fill="url(#sbg)" stroke="#b7c9f0"/><line x1="922.5" y1="757" x2="922.5" y2="765" stroke="#8aa4e0"/><line x1="924.5" y1="757" x2="924.5" y2="765" stroke="#8aa4e0"/><line x1="926.5" y1="757" x2="926.5" y2="765" stroke="#8aa4e0"/><line x1="928.5" y1="757" x2="928.5" y2="765" stroke="#8aa4e0"/><line x1="930.5" y1="757" x2="930.5" y2="765" stroke="#8aa4e0"/>
<rect x="985" y="743.5" width="166.5" height="22.5" fill="#f6fafe" stroke="#c8d8e8" stroke-width="1"/>
<g transform="rotate(-8 981 754)"><rect x="969.5" y="742" width="24" height="24" rx="5" fill="#f0582c" stroke="#fff" stroke-width="1.2"/><text x="981.5" y="762.5" text-anchor="middle" font-size="23" font-weight="bold" fill="#fff" font-family="'Liberation Sans',sans-serif">S</text></g>
<text x="1000" y="760.5" font-size="15" font-weight="900" fill="#2a74c0" font-family="'Liberation Sans','Noto Sans CJK SC',sans-serif">中</text>
<path d="M1035 748a7.5 7.5 0 1 1-10 10a9 9 0 0 0 10-10z" fill="#2a74c0"/>
<circle cx="1047.5" cy="751.5" r="1.8" fill="none" stroke="#2a74c0" stroke-width="1.3"/><path d="M1054 756.5a1.8 1.8 0 1 1 1.6 1.5c0 1.5-1 2.5-2.4 3c1-1 1.3-2 .8-4.5z" fill="#2a74c0"/>
<rect x="1065" y="748.5" width="16.5" height="11.5" rx="1.5" fill="#2a74c0"/><rect x="1067.0" y="750.5" width="2" height="1.6" fill="#fff"/><rect x="1067.0" y="753.3" width="2" height="1.6" fill="#fff"/><rect x="1070.4" y="750.5" width="2" height="1.6" fill="#fff"/><rect x="1070.4" y="753.3" width="2" height="1.6" fill="#fff"/><rect x="1073.8" y="750.5" width="2" height="1.6" fill="#fff"/><rect x="1073.8" y="753.3" width="2" height="1.6" fill="#fff"/><rect x="1077.2" y="750.5" width="2" height="1.6" fill="#fff"/><rect x="1077.2" y="753.3" width="2" height="1.6" fill="#fff"/><rect x="1068.5" y="756.5" width="9.5" height="1.6" fill="#fff"/>
<circle cx="1096" cy="750" r="3" fill="#b8c0c8"/><path d="M1089.5 761c0-5 3-6.5 6.5-6.5s6.5 1.5 6.5 6.5z" fill="#b8c0c8"/>
<path d="M1112 747.5l3.5-1.5c1 1.5 3 1.5 4 0l3.5 1.5 2 4-2.5 1.5-1-1.2v9.2h-8v-9.2l-1 1.2-2.5-1.5z" fill="#2a74c0"/>
<path d="M1131.5 762.5l7-8a4.5 4.5 0 0 1 5.5-6l-3 3 .5 2.5 2.5 .5 3-3a4.5 4.5 0 0 1-6 5.5l-7 7.5z" fill="#2a74c0"/>
<line x1="1088" y1="767.5" x2="1104" y2="767.5" stroke="#9ab0c8" stroke-width="1.5"/>
</svg>
<div id="cmdsep" class="abs"></div>
<div class="abs" style="left:5px;top:788px;width:3px;height:21px;border-left:1px solid #fff;border-right:1px solid #aca899"></div><div class="abs" style="left:9px;top:788px;width:3px;height:21px;border-left:1px solid #fff;border-right:1px solid #aca899"></div>
<div id="cmd" class="abs">命令:</div>
<div id="status" class="abs">
<div class="abs" style="left:7px;top:5px;font-size:12px;line-height:14px;white-space:nowrap">英科宇机械<span class="l">CAD2014</span></div>
<div class="abs" style="left:115px;top:2px;width:198px;height:18px;border:1px solid #aca899;border-right-color:#fff;border-bottom-color:#fff;font-size:12px;line-height:15px;padding-left:3px;white-space:nowrap;letter-spacing:-1.25px">8621.043, 2720.244, 0.000</div>
<div class="sb up" style="left:316px;width:29px">捕捉</div>
<div class="sb up" style="left:348px;width:29px">栅格</div>
<div class="sb up" style="left:380px;width:29px">正交</div>
<div class="sb dn" style="left:412px;width:30px">极轴</div>
<div class="sb dn" style="left:445px;width:54px">对象捕捉</div>
<div class="sb dn" style="left:501px;width:54px">对象追踪</div>
<div class="sb dn" style="left:557px;width:29px;font-size:12px;letter-spacing:-1.2px;padding-left:1px">DUCS</div>
<div class="sb dn" style="left:588px;width:24px;font-size:12px;letter-spacing:-1.2px;padding-left:1px">DYN</div>
<div class="sb up" style="left:614px;width:29px">线宽</div>
<div class="sb dn" style="left:646px;width:30px">模型</div>
<div class="abs" style="left:919px;top:3px;font-size:12px;line-height:16px;white-space:nowrap;font-family:'Liberation Mono','Noto Sans CJK SC',sans-serif">注释比例<span style="letter-spacing:-1.2px">:  1:1</span></div>
<svg class="abs" style="left:1000px;top:0" width="152" height="22" viewBox="1000 813 152 22">
<path d="M1002.5 822h7l-3.5 4z" fill="#000"/>
<path d="M1023 830l4-8 4 8zM1025 830l2-3 2 3" fill="none" stroke="#4a6a9a" stroke-width="1.2"/><circle cx="1033" cy="820" r="3.5" fill="#f8e060" stroke="#a89020" stroke-width=".8"/>
<path d="M1047 830l4-8 4 8zM1049 830l2-3 2 3" fill="none" stroke="#9a9a98" stroke-width="1.2"/><path d="M1053 823l5-6" stroke="#aaa" stroke-width="2"/>
<rect x="1066.5" y="815.5" width="43" height="18" fill="#fff" stroke="#d8d5c8"/>
<path d="M1070 823v-2c0-4 6-4 6 0v1" fill="none" stroke="#8a7a10" stroke-width="1.8"/><rect x="1072.5" y="822.5" width="9" height="8" fill="#e8c828" stroke="#6a5a08"/>
<rect x="1090.5" y="817.5" width="9" height="12" fill="#2a5a8a" stroke="#123"/><path d="M1093 820v6M1096 820v3" stroke="#fff" stroke-width="1.2"/><circle cx="1101.5" cy="827.5" r="4" fill="#28a838" stroke="#0a6a18" stroke-width=".8"/><path d="M1099.5 827.5l1.5 1.5 2.5-3" fill="none" stroke="#fff" stroke-width="1.2"/>
<path d="M1115.5 825h8l-4 4.5z" fill="#000"/>
<rect x="1131.5" y="815.5" width="16" height="16" fill="#dce8f8" stroke="#1a3a8a" stroke-width="1.4"/><rect x="1133.5" y="817.5" width="12" height="12" fill="none" stroke="#8aa4d0"/>
</svg>
</div>
<div id="task" class="abs">
<div class="abs" style="left:0;top:0;width:97px;height:29px;border-radius:0 12px 12px 0/0 14px 14px 0;background:linear-gradient(#4aa04a 0,#3f9a3f 3px,#359035 10px,#2f8a2f 20px,#2a7a2a 29px);box-shadow:inset -3px -2px 4px rgba(0,50,0,.45),inset 0 2px 2px rgba(170,230,150,.6),2px 0 3px rgba(0,0,60,.5)"></div>
<svg class="abs" style="left:8px;top:5px" width="22" height="20" viewBox="0 0 22 20"><path d="M2 3c3-2 5-1 8 0l-1.5 6c-3-1-5-2-8 0z" fill="#e8502a"/><path d="M11.5 3.5c3 1 5 2 8 0l-1.5 6c-3 2-5 1-8 0z" fill="#5ab82a"/><path d="M.5 10.5c3-2 5-1 8 0l-1.5 6c-3-1-5-2-8 0z" fill="#3a78e0"/><path d="M9.5 11c3 1 5 2 8 0l-1.5 6c-3 2-5 1-8 0z" fill="#f0c020"/></svg>
<div class="abs" style="left:36px;top:2px;font:italic normal 19px/24px 'Liberation Sans','Noto Sans CJK SC',sans-serif;color:#fff;text-shadow:1px 1px 1px #1a4a1a;letter-spacing:0">开始</div>
<svg class="abs" style="left:104px;top:3px" width="96" height="23" viewBox="104 838 96 23">
<rect x="109.5" y="841.5" width="16" height="16" rx="2" fill="#2a7ad8" stroke="#9ac4f4"/><path d="M112 850.5c0-3 4-3 5-1.5c2-2 6 0 4 3h-8c-1.5 0-1.5-1.5-1-1.5z" fill="none" stroke="#fff" stroke-width="1.3"/><path d="M112 855.5h11" stroke="#fff" stroke-width="1.3"/>
<rect x="132.5" y="841.5" width="16" height="16" fill="#2a6ad0" stroke="#e8f0fc" stroke-width="1.4"/><circle cx="139.5" cy="848.5" r="3.8" fill="#cfe4fa" stroke="#fff" stroke-width="1.4"/><path d="M142.5 851.5l4 4" stroke="#fff" stroke-width="2"/>
<text x="157" y="857" font-size="22" font-style="italic" font-weight="bold" fill="#48a8f0" stroke="#1a5ab0" stroke-width=".6" font-family="'Liberation Sans',sans-serif">e</text><path d="M156 854c2-8 12-14 17-11c1 2-3 5-6 7" fill="none" stroke="#e8c040" stroke-width="1.6"/>
<path d="M182 842l3 3-3 3M186.5 842l3 3-3 3" fill="none" stroke="#cfe0fa" stroke-width="1.4"/>
</svg>
<div class="tk" style="left:200px;width:144px"><i><svg width="16" height="16" viewBox="0 0 16 16"><path d="M2 8.5c0-3 4-3 5-1.5c2-2 6 0 4 3h-8c-1.5 0-1.5-1.5-1-1.5z" fill="none" stroke="#fff" stroke-width="1.4"/><path d="M1 14h13" stroke="#fff" stroke-width="1.4"/></svg></i><span>360云盘</span></div>
<div class="tk" style="left:347px;width:145px"><i><svg width="16" height="16" viewBox="0 0 16 16"><circle cx="8" cy="8" r="7" fill="#d8e4f4" stroke="#fff"/><path d="M11 4.5c-3-2-6 0-5 2.5s5 1 4 4-5 1.5-6 0" fill="none" stroke="#3a6ab8" stroke-width="2"/></svg></i><span>附件下载 - 蓝...</span></div>
<div class="tk" style="left:495px;width:145px"><i><svg width="16" height="16" viewBox="0 0 16 16"><path d="M5 2h6v6h3l-6 6-6-6h3z" fill="#3a8ad8" stroke="#2a6ab8" stroke-width=".8"/></svg></i><span style="left:30px;letter-spacing:.4px">下载管理器</span></div>
<div class="tk" style="left:643px;width:145px"><i><svg width="16" height="16" viewBox="0 0 16 16"><path d="M1 4l1.5-2h4l1.5 2h7v9h-14z" fill="#f0d060" stroke="#a88820" stroke-width=".8"/><path d="M1 13l2-6h12l-1 6z" fill="#f8e48a" stroke="#a88820" stroke-width=".8"/></svg></i><span style="letter-spacing:-.6px">C:\Documents a...</span></div>
<div class="tk act" style="left:791px;width:146px"><i><svg width="16" height="16" viewBox="0 0 16 16"><circle cx="8" cy="8" r="6.5" fill="#e8e0e0" stroke="#a03028" stroke-width="2" stroke-dasharray="2.5 1.5"/><circle cx="8" cy="8" r="3" fill="#4a6ab0" stroke="#c04030"/></svg></i><span>机械工程师<span class="l">CAD2...</span></span></div>
<svg class="abs" style="left:940px;top:0" width="212" height="29" viewBox="940 835 212 29">
<rect x="948.5" y="840.5" width="15" height="15" rx="1.5" fill="#f05a28" stroke="#fff" stroke-width="1.2"/><text x="956" y="853.5" text-anchor="middle" font-size="14" font-weight="bold" fill="#fff" font-family="'Liberation Sans',sans-serif">S</text>
<path d="M971.5 841.5h13v11h-5l-2 3v-3h-6z" fill="#fff" stroke="#222" stroke-width="1.2"/><text x="978" y="851" text-anchor="middle" font-size="11" font-weight="bold" fill="#111" font-family="'Liberation Sans',sans-serif">?</text>
<rect x="999.5" y="838.5" width="6" height="4" fill="none" stroke="#fff"/><rect x="996.5" y="841.5" width="6" height="4" fill="#245edc" stroke="#fff"/><path d="M997 852h6l-3 3.5z" fill="#fff"/>
<rect x="1021" y="835" width="131" height="29" fill="url(#tray)"/><line x1="1021.5" y1="835" x2="1021.5" y2="864" stroke="#0a3a9a"/><line x1="1022.5" y1="835" x2="1022.5" y2="864" stroke="#58b0f8"/>
<defs><linearGradient id="tray" x1="0" y1="0" x2="0" y2="1"><stop offset="0" stop-color="#1a9af0"/><stop offset=".15" stop-color="#1890ea"/><stop offset=".8" stop-color="#1284e0"/><stop offset="1" stop-color="#0a60c0"/></linearGradient></defs>
<rect x="1033.5" y="842.5" width="15" height="14" fill="#2a7ad8" stroke="#9ac4f4" stroke-width=".6"/><path d="M1036 850.5c0-3 4-3 5-1.5c2-2 6 0 4 3h-8c-1.5 0-1.5-1.5-1-1.5z" fill="none" stroke="#fff" stroke-width="1.3"/><path d="M1035 856.5h12" stroke="#fff" stroke-width="1.5"/>
<rect x="1051.5" y="845.5" width="8" height="7" fill="#cfe0f4" stroke="#56a"/><path d="M1053 855h5" stroke="#cde" stroke-width="1.5"/><path d="M1061 842c2 2 2 5 0 7M1063.5 840.5c3 3 3 7.5 0 10.5" fill="none" stroke="#58e058" stroke-width="1.3"/>
<path d="M1069.5 842.5h13v7c0 4-3 6-6.5 7.5c-3.5-1.5-6.5-3.5-6.5-7.5z" fill="#2a5ac0" stroke="#d8e8fc" stroke-width="1.3"/><path d="M1072 846l4 5 4-6" fill="none" stroke="#fff" stroke-width="1.6"/>
<circle cx="1092" cy="848" r="5.5" fill="#8a8e96" stroke="#d8dce4" stroke-width="1.2"/><circle cx="1091" cy="847" r="2" fill="#444"/><path d="M1096 852l4 4" stroke="#667" stroke-width="2.5"/>
<text x="1108" y="854.5" font-size="12" fill="#fff" font-family="'Liberation Mono',monospace" textLength="30" lengthAdjust="spacingAndGlyphs">14:46</text>
</svg>
</div>
</body></html>
